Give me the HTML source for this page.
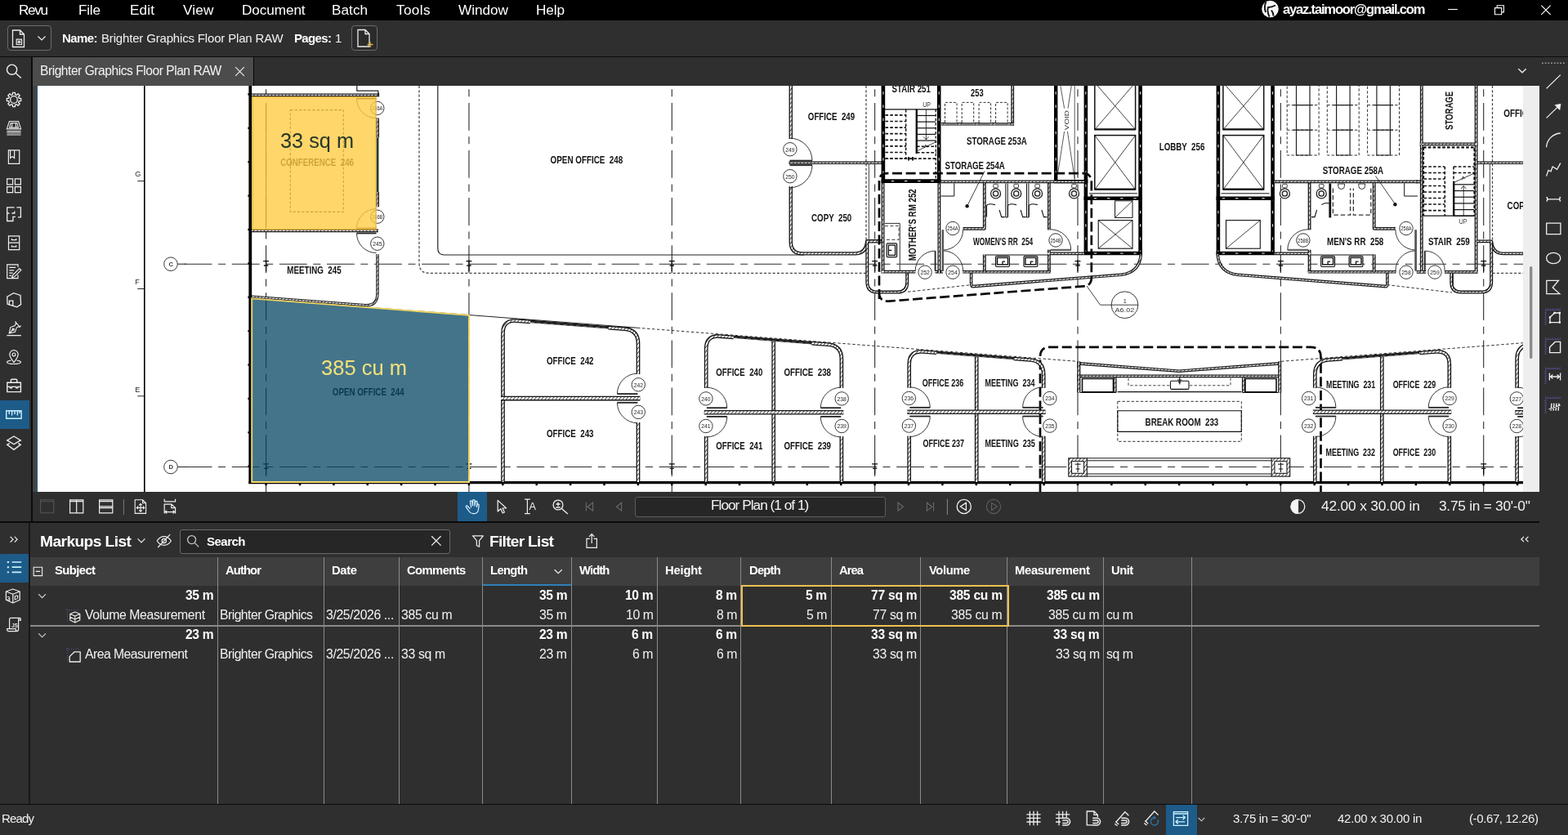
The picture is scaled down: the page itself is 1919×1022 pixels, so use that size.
<!DOCTYPE html>
<html lang="en"><head><meta charset="utf-8"><title>Revu - Brighter Graphics Floor Plan RAW</title>
<style>
html,body{margin:0;padding:0;background:#2f2f2f;overflow:hidden}
#app{position:relative;width:1919px;height:1022px;overflow:hidden;font-family:"Liberation Sans",sans-serif;background:#2f2f2f}
.b,.t,.i{position:absolute;display:block}
.t{white-space:pre;line-height:1;color:#f2f2f2;will-change:transform}
#cv{position:absolute;left:46px;top:105px;width:1838px;height:497px;background:#fff;overflow:hidden}
#cv svg{position:absolute;left:-46px;top:-105px}
#cv text{font-family:"Liberation Sans",sans-serif;stroke:none}
</style></head><body>
<div id="app">
<div class="b" style="left:0px;top:0px;width:1919px;height:25px;background:#000;"></div>
<span class="t" style="left:23px;top:3.74px;font-size:17.2px;letter-spacing:-1.38px;color:#fff;">Revu</span>
<span class="t" style="left:95.5px;top:3.74px;font-size:17.2px;letter-spacing:-0.24px;color:#fff;">File</span>
<span class="t" style="left:158.5px;top:3.74px;font-size:17.2px;letter-spacing:0.12px;color:#fff;">Edit</span>
<span class="t" style="left:224px;top:3.74px;font-size:17.2px;letter-spacing:0.18px;color:#fff;">View</span>
<span class="t" style="left:295.8px;top:3.74px;font-size:17.2px;letter-spacing:-0.1px;color:#fff;">Document</span>
<span class="t" style="left:405.8px;top:3.74px;font-size:17.2px;letter-spacing:0.05px;color:#fff;">Batch</span>
<span class="t" style="left:485px;top:3.74px;font-size:17.2px;letter-spacing:0.34px;color:#fff;">Tools</span>
<span class="t" style="left:560.5px;top:3.74px;font-size:17.2px;letter-spacing:-0.03px;color:#fff;">Window</span>
<span class="t" style="left:655.5px;top:3.74px;font-size:17.2px;letter-spacing:-0.12px;color:#fff;">Help</span>
<span class="t" style="left:1570px;top:3.75px;font-size:16.6px;letter-spacing:-1.2px;font-weight:700;color:#fff;">ayaz.taimoor@gmail.com</span>
<svg class="i" style="left:1543px;top:0px" width="23" height="23" viewBox="0 0 23 23" fill="none" stroke="#ececec" stroke-width="1.3" ><circle cx="11.5" cy="11" r="10.3" fill="#f4f4f4" stroke="none"/><path d="M6.5 2.5C4.5 6 4.3 10 6 15M18 6.5C15 8 12 9 9 9C8 12 8.5 16 10.5 20.5M13 12.5C14.5 14.5 15.5 17 15.5 19.5" stroke="#111" stroke-width="1.9"/></svg>
<svg class="i" style="left:1770px;top:4px" width="16" height="16" viewBox="0 0 16 16" fill="none" stroke="#fff" stroke-width="1.1" ><path d="M2.2 7.5H13.8"/></svg>
<svg class="i" style="left:1827px;top:4px" width="16" height="16" viewBox="0 0 16 16" fill="none" stroke="#fff" stroke-width="1.1" ><path d="M2.5 5.6h8.2v8.2h-8.2zM5.2 5.3V2.7h8.2v8.2h-2.5"/></svg>
<svg class="i" style="left:1884px;top:4px" width="16" height="16" viewBox="0 0 16 16" fill="none" stroke="#fff" stroke-width="1.2" ><path d="M2.3 2.6l11.3 11.3M13.6 2.6L2.3 13.9"/></svg>
<div class="b" style="left:0px;top:25px;width:1919px;height:44px;background:#2f2f2f;"></div>
<div class="b" style="left:0px;top:69px;width:1919px;height:1px;background:#0c0c0c;"></div>
<div class="b" style="left:9px;top:31px;width:54px;height:31px;border:1px solid #6c6c6c;border-radius:4px;box-sizing:border-box;background:#2b2b2b"></div>
<svg class="i" style="left:13px;top:35px" width="22" height="24" viewBox="0 0 22 24" fill="none" stroke="#ececec" stroke-width="1.3" ><path d="M2.5 2h9l5 5v15.5h-14z M11.5 2v5h5" stroke-width="1.3"/><path d="M7.2 13.2h6.3v6.3h-6.3z M9.3 15.3h2.1v2.1h-2.1z" stroke-width="1.2"/></svg>
<svg class="i" style="left:44px;top:42px" width="14" height="10" viewBox="0 0 14 10" fill="none" stroke="#ececec" stroke-width="1.2" ><path d="M2.5 2.5L7 7L11.5 2.5"/></svg>
<span class="t" style="left:76px;top:39.3px;font-size:15px;letter-spacing:-0.59px;font-weight:700;color:#fff;">Name:</span>
<span class="t" style="left:124px;top:39.3px;font-size:15px;letter-spacing:-0.17px;color:#f2f2f2;">Brighter Graphics Floor Plan RAW</span>
<span class="t" style="left:359.5px;top:39.3px;font-size:15px;letter-spacing:-0.64px;font-weight:700;color:#fff;">Pages:</span>
<span class="t" style="left:410px;top:39.3px;font-size:15px;color:#f2f2f2;">1</span>
<div class="b" style="left:430px;top:31px;width:32px;height:31px;border:1px solid #6c6c6c;border-radius:4px;box-sizing:border-box;background:#2b2b2b"></div>
<svg class="i" style="left:435px;top:34px" width="24" height="26" viewBox="0 0 24 26" fill="none" stroke="#ececec" stroke-width="1.3" ><path d="M3 2.5h9l5 5v15.5h-14z M12 2.5v5h5" stroke-width="1.3"/><path d="M18 17v7M14.5 20.5h7" stroke="#e0b23e" stroke-width="1.3"/></svg>
<div class="b" style="left:0px;top:70px;width:1919px;height:35px;background:#2f2f2f;"></div>
<div class="b" style="left:37.5px;top:70px;width:2px;height:568px;background:#0c0c0c;"></div>
<div class="b" style="left:40px;top:70px;width:270px;height:35px;background:#4c4c4c;"></div>
<div class="b" style="left:310px;top:70px;width:1.4px;height:35px;background:#050505;"></div>
<span class="t" style="left:49px;top:78.79px;font-size:15.6px;letter-spacing:-0.47px;color:#f4f4f4;">Brighter Graphics Floor Plan RAW</span>
<svg class="i" style="left:286px;top:80px" width="15" height="15" viewBox="0 0 15 15" fill="none" stroke="#ececec" stroke-width="1.2" ><path d="M2.2 2.2l10.6 10.6M12.8 2.2L2.2 12.8"/></svg>
<svg class="i" style="left:1856px;top:82px" width="14" height="10" viewBox="0 0 14 10" fill="none" stroke="#ececec" stroke-width="1.3" ><path d="M2.3 2.3L7 6.8L11.7 2.3"/></svg>
<div class="b" style="left:0px;top:70px;width:37.5px;height:568px;background:#2f2f2f;"></div>
<div class="b" style="left:0px;top:489.5px;width:36px;height:35px;background:#1d5b89;"></div>
<div class="b" style="left:39.5px;top:105px;width:4.5px;height:499px;background:#444;"></div>
<div class="b" style="left:43.6px;top:105px;width:2.4px;height:499px;background:linear-gradient(90deg,#3d5560,#17506a)"></div>
<div class="b" style="left:1884px;top:70px;width:35px;height:952px;background:#2f2f2f;"></div>
<div class="b" style="left:39.5px;top:602px;width:1844.5px;height:36px;background:#2f2f2f;"></div>
<div class="b" style="left:0px;top:638px;width:1884px;height:2px;background:#0a0a0a;"></div>
<div class="b" style="left:559.5px;top:602px;width:36.5px;height:36px;background:#1d5b89;"></div>
<div class="b" style="left:777px;top:607.5px;width:306.5px;height:25px;border:1px solid #5c5c5c;border-radius:3px;box-sizing:border-box;background:#262626"></div>
<span class="t" style="left:870px;top:610.36px;font-size:17.3px;letter-spacing:-1px;color:#f2f2f2;">Floor Plan (1 of 1)</span>
<span class="t" style="left:1616.5px;top:611.36px;font-size:17.3px;letter-spacing:-0.14px;color:#f2f2f2;">42.00 x 30.00 in</span>
<span class="t" style="left:1760.5px;top:611.36px;font-size:17.3px;letter-spacing:-0.25px;color:#f2f2f2;">3.75 in = 30'-0"</span>
<div class="b" style="left:0px;top:640px;width:1884px;height:382px;background:#2f2f2f;"></div>
<div class="b" style="left:35px;top:640px;width:1.6px;height:344px;background:#181818;"></div>
<div class="b" style="left:0px;top:677.5px;width:35px;height:35px;background:#1d5b89;"></div>
<span class="t" style="left:48.5px;top:652.75px;font-size:19.2px;letter-spacing:-0.58px;font-weight:700;color:#fff;">Markups List</span>
<div class="b" style="left:220px;top:648px;width:330.5px;height:30px;border:1px solid #6a6a6a;border-radius:3px;box-sizing:border-box;background:#262626"></div>
<span class="t" style="left:253px;top:654.6px;font-size:15px;letter-spacing:-0.51px;font-weight:700;color:#fff;">Search</span>
<span class="t" style="left:599px;top:652.75px;font-size:19.2px;letter-spacing:-0.74px;font-weight:700;color:#fff;">Filter List</span>
<div class="b" style="left:36.5px;top:682px;width:1847.5px;height:35px;background:#3e3e3e;"></div>
<div class="b" style="left:265.5px;top:682px;width:1.3px;height:302px;background:#8a8a8a;"></div>
<div class="b" style="left:395.5px;top:682px;width:1.3px;height:302px;background:#8a8a8a;"></div>
<div class="b" style="left:487.8px;top:682px;width:1.3px;height:302px;background:#8a8a8a;"></div>
<div class="b" style="left:589.5px;top:682px;width:1.3px;height:302px;background:#8a8a8a;"></div>
<div class="b" style="left:698.8px;top:682px;width:1.3px;height:302px;background:#8a8a8a;"></div>
<div class="b" style="left:803.5px;top:682px;width:1.3px;height:302px;background:#8a8a8a;"></div>
<div class="b" style="left:906.2px;top:682px;width:1.3px;height:302px;background:#8a8a8a;"></div>
<div class="b" style="left:1016.5px;top:682px;width:1.3px;height:302px;background:#8a8a8a;"></div>
<div class="b" style="left:1126.2px;top:682px;width:1.3px;height:302px;background:#8a8a8a;"></div>
<div class="b" style="left:1231.8px;top:682px;width:1.3px;height:302px;background:#8a8a8a;"></div>
<div class="b" style="left:1349.8px;top:682px;width:1.3px;height:302px;background:#8a8a8a;"></div>
<div class="b" style="left:1458px;top:682px;width:1.3px;height:302px;background:#8a8a8a;"></div>
<div class="b" style="left:590.5px;top:715px;width:108.5px;height:2px;background:#2f7fb8;"></div>
<span class="t" style="left:66.7px;top:691.07px;font-size:14.8px;letter-spacing:-0.58px;font-weight:700;color:#fff;">Subject</span>
<span class="t" style="left:276px;top:691.07px;font-size:14.8px;letter-spacing:-0.9px;font-weight:700;color:#fff;">Author</span>
<span class="t" style="left:406px;top:691.07px;font-size:14.8px;letter-spacing:-0.36px;font-weight:700;color:#fff;">Date</span>
<span class="t" style="left:498px;top:691.07px;font-size:14.8px;letter-spacing:-0.6px;font-weight:700;color:#fff;">Comments</span>
<span class="t" style="left:600px;top:691.07px;font-size:14.8px;letter-spacing:-0.66px;font-weight:700;color:#fff;">Length</span>
<span class="t" style="left:709.3px;top:691.07px;font-size:14.8px;letter-spacing:-0.89px;font-weight:700;color:#fff;">Width</span>
<span class="t" style="left:814px;top:691.07px;font-size:14.8px;letter-spacing:-0.21px;font-weight:700;color:#fff;">Height</span>
<span class="t" style="left:917.3px;top:691.07px;font-size:14.8px;letter-spacing:-0.81px;font-weight:700;color:#fff;">Depth</span>
<span class="t" style="left:1027.3px;top:691.07px;font-size:14.8px;letter-spacing:-0.97px;font-weight:700;color:#fff;">Area</span>
<span class="t" style="left:1137.3px;top:691.07px;font-size:14.8px;letter-spacing:-0.43px;font-weight:700;color:#fff;">Volume</span>
<span class="t" style="left:1242px;top:691.07px;font-size:14.8px;letter-spacing:-0.34px;font-weight:700;color:#fff;">Measurement</span>
<span class="t" style="left:1360.3px;top:691.07px;font-size:14.8px;letter-spacing:-0.52px;font-weight:700;color:#fff;">Unit</span>
<div class="b" style="left:36.5px;top:765.3px;width:1847.5px;height:2px;background:#8a8a8a;"></div>
<span class="t" style="left:226.83px;top:720.59px;font-size:15.6px;letter-spacing:-0.3px;font-weight:700;color:#fff;">35 m</span>
<span class="t" style="left:659.63px;top:720.59px;font-size:15.6px;letter-spacing:-0.3px;font-weight:700;color:#fff;">35 m</span>
<span class="t" style="left:764.83px;top:720.59px;font-size:15.6px;letter-spacing:-0.3px;font-weight:700;color:#fff;">10 m</span>
<span class="t" style="left:876.29px;top:720.59px;font-size:15.6px;letter-spacing:-0.34px;font-weight:700;color:#fff;">8 m</span>
<span class="t" style="left:986.09px;top:720.59px;font-size:15.6px;letter-spacing:-0.34px;font-weight:700;color:#fff;">5 m</span>
<span class="t" style="left:1065.86px;top:720.59px;font-size:15.6px;letter-spacing:-0.24px;font-weight:700;color:#fff;">77 sq m</span>
<span class="t" style="left:1162px;top:720.59px;font-size:15.6px;letter-spacing:-0.24px;font-weight:700;color:#fff;">385 cu m</span>
<span class="t" style="left:1280.7px;top:720.59px;font-size:15.6px;letter-spacing:-0.24px;font-weight:700;color:#fff;">385 cu m</span>
<span class="t" style="left:660.4px;top:744.83px;font-size:15.8px;letter-spacing:-0.41px;color:#f2f2f2;">35 m</span>
<span class="t" style="left:765.6px;top:744.83px;font-size:15.8px;letter-spacing:-0.41px;color:#f2f2f2;">10 m</span>
<span class="t" style="left:877.08px;top:744.83px;font-size:15.8px;letter-spacing:-0.46px;color:#f2f2f2;">8 m</span>
<span class="t" style="left:986.88px;top:744.83px;font-size:15.8px;letter-spacing:-0.46px;color:#f2f2f2;">5 m</span>
<span class="t" style="left:1068.26px;top:744.83px;font-size:15.8px;letter-spacing:-0.33px;color:#f2f2f2;">77 sq m</span>
<span class="t" style="left:1164.38px;top:744.83px;font-size:15.8px;letter-spacing:-0.32px;color:#f2f2f2;">385 cu m</span>
<span class="t" style="left:1283.08px;top:744.83px;font-size:15.8px;letter-spacing:-0.32px;color:#f2f2f2;">385 cu m</span>
<span class="t" style="left:226.83px;top:768.79px;font-size:15.6px;letter-spacing:-0.3px;font-weight:700;color:#fff;">23 m</span>
<span class="t" style="left:659.63px;top:768.79px;font-size:15.6px;letter-spacing:-0.3px;font-weight:700;color:#fff;">23 m</span>
<span class="t" style="left:773.29px;top:768.79px;font-size:15.6px;letter-spacing:-0.34px;font-weight:700;color:#fff;">6 m</span>
<span class="t" style="left:876.29px;top:768.79px;font-size:15.6px;letter-spacing:-0.34px;font-weight:700;color:#fff;">6 m</span>
<span class="t" style="left:1065.86px;top:768.79px;font-size:15.6px;letter-spacing:-0.24px;font-weight:700;color:#fff;">33 sq m</span>
<span class="t" style="left:1289.16px;top:768.79px;font-size:15.6px;letter-spacing:-0.24px;font-weight:700;color:#fff;">33 sq m</span>
<span class="t" style="left:660.4px;top:792.83px;font-size:15.8px;letter-spacing:-0.41px;color:#f2f2f2;">23 m</span>
<span class="t" style="left:774.08px;top:792.83px;font-size:15.8px;letter-spacing:-0.46px;color:#f2f2f2;">6 m</span>
<span class="t" style="left:877.08px;top:792.83px;font-size:15.8px;letter-spacing:-0.46px;color:#f2f2f2;">6 m</span>
<span class="t" style="left:1068.26px;top:792.83px;font-size:15.8px;letter-spacing:-0.33px;color:#f2f2f2;">33 sq m</span>
<span class="t" style="left:1291.56px;top:792.83px;font-size:15.8px;letter-spacing:-0.33px;color:#f2f2f2;">33 sq m</span>
<span class="t" style="left:103.5px;top:744.83px;font-size:15.8px;letter-spacing:-0.39px;color:#f2f2f2;">Volume Measurement</span>
<span class="t" style="left:269.3px;top:744.83px;font-size:15.8px;letter-spacing:-0.56px;color:#f2f2f2;">Brighter Graphics</span>
<span class="t" style="left:399px;top:744.83px;font-size:15.8px;letter-spacing:-0.38px;color:#f2f2f2;">3/25/2026 ...</span>
<span class="t" style="left:491px;top:744.83px;font-size:15.8px;letter-spacing:-0.32px;color:#f2f2f2;">385 cu m</span>
<span class="t" style="left:1353.5px;top:744.83px;font-size:15.8px;letter-spacing:-0.4px;color:#f2f2f2;">cu m</span>
<span class="t" style="left:103.5px;top:792.83px;font-size:15.8px;letter-spacing:-0.56px;color:#f2f2f2;">Area Measurement</span>
<span class="t" style="left:269.3px;top:792.83px;font-size:15.8px;letter-spacing:-0.56px;color:#f2f2f2;">Brighter Graphics</span>
<span class="t" style="left:399px;top:792.83px;font-size:15.8px;letter-spacing:-0.38px;color:#f2f2f2;">3/25/2026 ...</span>
<span class="t" style="left:491px;top:792.83px;font-size:15.8px;letter-spacing:-0.33px;color:#f2f2f2;">33 sq m</span>
<span class="t" style="left:1353.5px;top:792.83px;font-size:15.8px;letter-spacing:-0.4px;color:#f2f2f2;">sq m</span>
<div class="b" style="left:906.5px;top:715.5px;width:328px;height:51px;border:2px solid #eec052;box-sizing:border-box"></div>
<div class="b" style="left:0px;top:984px;width:1919px;height:1px;background:#0c0c0c;"></div>
<div class="b" style="left:0px;top:985px;width:1919px;height:37px;background:#2f2f2f;"></div>
<div class="b" style="left:1426.5px;top:985px;width:38px;height:37px;background:#1d5b89;"></div>
<span class="t" style="left:1.5px;top:994.3px;font-size:15px;letter-spacing:-0.84px;color:#f2f2f2;">Ready</span>
<span class="t" style="left:1509.3px;top:994.3px;font-size:15px;letter-spacing:-0.32px;color:#f2f2f2;">3.75 in = 30'-0"</span>
<span class="t" style="left:1637px;top:994.3px;font-size:15px;letter-spacing:-0.22px;color:#f2f2f2;">42.00 x 30.00 in</span>
<span class="t" style="left:1798px;top:994.3px;font-size:15px;letter-spacing:-0.39px;color:#f2f2f2;">(-0.67, 12.26)</span>
<svg class="i" style="left:0;top:0;pointer-events:none" width="1919" height="1022" viewBox="0 0 1919 1022" fill="none" stroke-linecap="butt"><g transform="translate(8 78)" stroke="#efefef" stroke-width="1.4"><circle cx="6.6" cy="7.2" r="6.1"/><path d="M11.2 11.6L17.8 17.6"/></g><g transform="translate(8 113)" stroke="#efefef" stroke-width="1.3"><path d="M17.67 7.49L17.67 10.51L15.42 10.54L14.63 12.45L16.2 14.06L14.06 16.2L12.45 14.63L10.54 15.42L10.51 17.67L7.49 17.67L7.46 15.42L5.55 14.63L3.94 16.2L1.8 14.06L3.37 12.45L2.58 10.54L0.33 10.51L0.33 7.49L2.58 7.46L3.37 5.55L1.8 3.94L3.94 1.8L5.55 3.37L7.46 2.58L7.49 0.33L10.51 0.33L10.54 2.58L12.45 3.37L14.06 1.8L16.2 3.94L14.63 5.55L15.42 7.46Z" stroke-linejoin="round"/><circle cx="9" cy="9" r="4.3"/></g><g transform="translate(8 148)" stroke="#efefef" stroke-width="1.1"><path d="M3.4 0.5h11.2l3 9.4H0.4z M5.2 2.5h7.6l1.6 5.6H3.6z M7 2.6l-0.7 5.4 M11 2.6l0.7 5.4 M0.4 12.6h17.2 M0.4 14.8h17.2 M0.4 17h17.2"/></g><g transform="translate(8 183)" stroke="#efefef" stroke-width="1.2"><path d="M2.4 0.9h13.3v16.5H2.4z M4.6 0.9v9.6l2.5-2l2.5 2V0.9"/></g><g transform="translate(8 218)" stroke="#efefef" stroke-width="1.2"><path d="M0.6 0.9h7v7h-7z M10.4 0.9h7v7h-7z M0.6 10.6h7v7h-7z M10.4 10.6h7v7h-7z"/></g><g transform="translate(8 253)" stroke="#efefef" stroke-width="1.3"><path d="M9.6 0.9H0.7v16.6h7.2v-5.2h3 M3.4 8h-2.6 M6.4 8h3.4V5.4 M12.4 0.9h5v12h-3.4"/></g><g transform="translate(8 288)" stroke="#efefef" stroke-width="1.2"><path d="M2.5 0.8h13.2v16.8H2.5z M2.5 9.2h13.2 M6.4 4v1.7h5.4V4 M6.4 12.2v1.7h5.4v-1.7"/></g><g transform="translate(8 323)" stroke="#efefef" stroke-width="1.2"><path d="M14 4V0.8H0.7v16.8H14v-4 M3.2 4.4h8 M3.2 7.8h6 M3.2 11.2h4.6 M3.2 14.4h3"/><path d="M15.8 5.6l2 2l-8.2 8.2l-3 1l1-3z" fill="#2e2e2e"/></g><g transform="translate(8 358)" stroke="#efefef" stroke-width="1.3"><path d="M0.7 5.2L8.6 0.7l8.4 2.7l0.6 11.2l-4.8 3.2l-11.7-3.6z M3.4 14.6v-4.4h4.4v5.6"/></g><g transform="translate(8 393)" stroke="#efefef" stroke-width="1.3"><path d="M0.4 17.6h17.4"/><path d="M10.6 1.2l5.6 5.6 M11.6 2.4l-1.4 3.2l-5.4 2l-1.6 7.4l7.2-1.8l2-5.4l3.2-1.4 M3.4 14.8l4.4-4.4 M17.6 5.6l-2 2.4 M10.6 0.4l1.4 1.6" stroke-width="1.1"/><circle cx="8.2" cy="10.2" r="1.1"/></g><g transform="translate(8 428)" stroke="#efefef" stroke-width="1.2"><path d="M9 15.6C5.4 11 3.8 8.4 3.8 5.8a5.2 5.2 0 0 1 10.4 0C14.2 8.4 12.6 11 9 15.6z"/><circle cx="9" cy="5.9" r="1.9"/><path d="M5.4 13.2C2.4 13.6 0.6 14.3 0.6 15.3c0 1.3 3.6 2.2 8.4 2.2s8.4-0.9 8.4-2.2c0-1-1.8-1.7-4.8-2.1"/></g><g transform="translate(8 463)" stroke="#efefef" stroke-width="1.4"><path d="M0.8 5.2h16.6v11.4H0.8z M5.4 5V2.6Q5.4 1.2 6.8 1.2h4.6Q12.8 1.2 12.8 2.6V5 M0.8 10.4h3.6v1.4h2v-1.4h5.4v1.4h2v-1.4h3.6"/></g><g transform="translate(8 498)" stroke="#c9f1ff" stroke-width="1.4"><path d="M-0.3 4.8h18.4v9.4H-0.3z M3.2 5v4 M6.6 5v5.6 M10 5v4 M13.4 5v5.6 M16 5v3"/></g><g transform="translate(8 533)" stroke="#efefef" stroke-width="1.4"><path d="M9 1L17.2 5.9L9 10.8L0.8 5.9z M3.6 9.6L0.8 11.4L9 17.4L17.2 11.4L14.4 9.6"/></g><path d="M1887 77.3H1915" stroke="#9a9a9a" stroke-width="1.6" stroke-dasharray="1.8 1.9"/><g transform="translate(1892 90)" stroke="#efefef" stroke-width="1.3"><path d="M0.6 18.4L17.8 1.6"/></g><g transform="translate(1892 126)" stroke="#efefef" stroke-width="1.3"><path d="M0.6 18.4L15 4.4"/><path d="M11.2 2.6L18 1.4L16.8 8.4z" fill="#efefef" stroke-width="0.8"/></g><g transform="translate(1892 162)" stroke="#efefef" stroke-width="1.3"><path d="M0.6 18.2C1 9.6 7.6 1.8 17.8 1"/></g><g transform="translate(1892 198)" stroke="#efefef" stroke-width="1.3"><path d="M0.6 17.6L3 10.4l3 1.4l2.2-5.8l5.4 3.4L17.8 1.6"/></g><g transform="translate(1892 234)" stroke="#efefef" stroke-width="1.2"><path d="M1.6 9.8H17 M1.6 7v5.6 M17 7v5.6 M0.6 7.2l2 2.6l-2 2.6 M18 7.2l-2 2.6l2 2.6" stroke-width="1.2"/></g><g transform="translate(1892 270)" stroke="#efefef" stroke-width="1.3"><path d="M0.7 3.2h17.2v13.4H0.7z"/></g><g transform="translate(1892 306)" stroke="#efefef" stroke-width="1.3"><ellipse cx="9.2" cy="10" rx="8.6" ry="6.6"/></g><g transform="translate(1892 342)" stroke="#efefef" stroke-width="1.3"><path d="M0.8 1.4h14.6l-7.2 8.6l8.6 7.6H0.8z"/></g><g transform="translate(1892 378)" stroke="#efefef" stroke-width="1.3"><path d="M-0.2 -1.2V20 M-0.4 1.4H17.6 M2.6 -0.6v2 M5.6 -0.6v2 M8.6 -0.6v2 M11.6 -0.6v2 M14.6 -0.6v2 M17.4 -0.6v2 M-1.8 4.4h1.6 M-1.8 7.4h1.6 M-1.8 10.4h1.6 M-1.8 13.4h1.6 M-1.8 16.4h1.6 M-1.8 19.4h1.6" stroke="#504f8c" stroke-width="0.9"/><path d="M5 16.6V10.4l5.6-5.4h6.2v11.6z"/><path d="M3.8 15.4h2.4v2.4H3.8z M3.8 9.2h2.4v2.4H3.8z M9.4 3.8h2.4v2.4H9.4z M15.6 3.8h2.4v2.4h-2.4z M15.6 15.4h2.4v2.4h-2.4z" fill="#efefef" stroke="none"/></g><g transform="translate(1892 414)" stroke="#efefef" stroke-width="1.4"><path d="M-0.2 -1.2V20 M-0.4 1.4H17.6 M2.6 -0.6v2 M5.6 -0.6v2 M8.6 -0.6v2 M11.6 -0.6v2 M14.6 -0.6v2 M17.4 -0.6v2 M-1.8 4.4h1.6 M-1.8 7.4h1.6 M-1.8 10.4h1.6 M-1.8 13.4h1.6 M-1.8 16.4h1.6 M-1.8 19.4h1.6" stroke="#504f8c" stroke-width="0.9"/><path d="M4.6 17.6V11l6.6-6.6h6.4v13.2z"/></g><g transform="translate(1892 450)" stroke="#efefef" stroke-width="1.3"><path d="M-0.2 -1.2V20 M-0.4 1.4H17.6 M2.6 -0.6v2 M5.6 -0.6v2 M8.6 -0.6v2 M11.6 -0.6v2 M14.6 -0.6v2 M17.4 -0.6v2 M-1.8 4.4h1.6 M-1.8 7.4h1.6 M-1.8 10.4h1.6 M-1.8 13.4h1.6 M-1.8 16.4h1.6 M-1.8 19.4h1.6" stroke="#504f8c" stroke-width="0.9"/><path d="M4.4 6.6v8.8 M17.6 6.6v8.8 M5.4 11h11.2 M8.4 8.6L5.6 11l2.8 2.4 M13.6 8.6l2.8 2.4l-2.8 2.4" stroke-width="1.3"/></g><g transform="translate(1892 486)" stroke="#efefef" stroke-width="1.3"><path d="M-0.2 -1.2V20 M-0.4 1.4H17.6 M2.6 -0.6v2 M5.6 -0.6v2 M8.6 -0.6v2 M11.6 -0.6v2 M14.6 -0.6v2 M17.4 -0.6v2 M-1.8 4.4h1.6 M-1.8 7.4h1.6 M-1.8 10.4h1.6 M-1.8 13.4h1.6 M-1.8 16.4h1.6 M-1.8 19.4h1.6" stroke="#504f8c" stroke-width="0.9"/><path d="M7 7.6l-1 9 M10 7.6l-1 9 M13 7.6l-1 9 M16 7.6l-1 9 M3.6 14.6l14-4.8" stroke-width="1.4"/></g><g transform="translate(49 611)" stroke="#555" stroke-width="1.1"><path d="M0.6 0.8h16.2v16H0.6z M0.6 2.8h16.2"/></g><g transform="translate(85 611)" stroke="#efefef" stroke-width="1.2"><path d="M0.6 0.8h16.2v16H0.6z M8.7 0.8v16 M0.6 2.6h16.2"/></g><g transform="translate(121 611)" stroke="#efefef" stroke-width="1.2"><path d="M0.6 0.8h16.2v16H0.6z M0.6 8.8h16.2 M0.6 2.6h16.2 M0.6 10.6h16.2"/></g><path d="M151.4 611V630" stroke="#777" stroke-width="1"/><g transform="translate(164.6 611)" stroke="#efefef" stroke-width="1.1"><path d="M0.6 0.8h9.4l4 4v12.6H0.6z M10 0.8v4h4 M7.4 5.6v9.6 M2.6 10.4h9.6 M5.6 7.4l1.8-1.8l1.8 1.8 M5.6 13.4l1.8 1.8l1.8-1.8 M4.4 8.6l-1.8 1.8l1.8 1.8 M10.4 8.6l1.8 1.8l-1.8 1.8"/></g><g transform="translate(200.6 610.6)" stroke="#efefef" stroke-width="1.2"><path d="M0.6 0.2v3.6 M14 0.2v3.6 M0.6 3.2h13.4 M0.6 18V6.6h8.6l4.8 4.4v7 M9.2 6.6v4.4h4.8 M1.6 16h11.6 M3.6 14l-2 2l2 2 M11 14l2 2l-2 2"/></g><g transform="translate(570 610.6)" stroke="#d6f2ff" stroke-width="1.25" stroke-linecap="round" stroke-linejoin="round"><path d="M4.6 11.4L2.2 8.8C1 7.6-0.4 9 0.7 10.5L4.2 15.4C5.4 17.2 6.8 18 8.8 18h1.6c3 0 4.6-1.8 5-4.6l0.8-5.6c0.2-1.6-1.8-2-2.2-0.4l-0.6 2.6 M13.4 9.8L14 4c0.2-1.6-2-1.9-2.3-0.3L11 8.6 M11 8.4V2.2c0-1.6-2.4-1.6-2.4 0v6 M8.6 8.2L7.8 3.2C7.5 1.6 5.2 2 5.5 3.6L6.6 10 M4.6 11.4l0.4 0.4"/></g><g transform="translate(608 611.6)" stroke="#efefef" stroke-width="1.2" stroke-linejoin="round"><path d="M1.2 0.8v13.6l3.6-3.2l2.4 5.2l2.2-1l-2.4-5h4.6z"/></g><g transform="translate(641.6 610.6)" stroke="#efefef" stroke-width="1.2"><path d="M0.4 0.6h6.8 M0.4 18h6.8 M3.8 0.6V18"/></g><text x="647.6" y="624.2" font-size="13.4" fill="#efefef" textLength="8.4" lengthAdjust="spacingAndGlyphs" stroke="none">A</text><g transform="translate(672 608)" stroke="#efefef" stroke-width="1.3"><circle cx="11" cy="10" r="5.9"/><path d="M15.4 14.4L22.8 21 M8.4 9h5.2 M11 6.4v5.2 M8.4 13h5.2"/></g><g transform="translate(716.6 614.6)" stroke="#6a6a6a" stroke-width="1.1"><path d="M0.8 0.2v10.8 M9 0.6L2.4 5.6L9 10.6z"/></g><g transform="translate(753.6 614.6)" stroke="#6a6a6a" stroke-width="1.1"><path d="M7 0.6L0.8 5.6L7 10.6z"/></g><g transform="translate(1098.6 614.6)" stroke="#6a6a6a" stroke-width="1.1"><path d="M0.4 0.6L6.8 5.6L0.4 10.6z"/></g><g transform="translate(1134 614.6)" stroke="#6a6a6a" stroke-width="1.1"><path d="M0.4 0.6L6.8 5.6L0.4 10.6z M8.6 0.2v10.8"/></g><path d="M1159.4 610.8V630" stroke="#8a8a8a" stroke-width="1"/><g transform="translate(1179.8 620)" stroke="#efefef" stroke-width="1.3"><circle r="8.6"/><path d="M2.6 -4.6L-4.4 0L2.6 4.6z"/></g><g transform="translate(1216 620)" stroke="#5c5c5c" stroke-width="1.2"><circle r="8.6"/><path d="M-2.4 -4.6L4.6 0L-2.4 4.6z"/></g><g transform="translate(1579.4 611)" stroke="#efefef" stroke-width="1.3"><circle cx="9" cy="9" r="8.4"/><path d="M9 0.6a8.4 8.4 0 0 0 0 16.8z" fill="#f4f4f4"/></g><g transform="translate(12 656)" stroke="#efefef" stroke-width="1.2"><path d="M0.6 0.8l3.4 3.4l-3.4 3.4 M5.8 0.8l3.4 3.4l-3.4 3.4"/></g><g transform="translate(1861 656.4)" stroke="#efefef" stroke-width="1.2"><path d="M4 0.4L0.8 3.6L4 6.8 M9.4 0.4L6.2 3.6L9.4 6.8"/></g><g transform="translate(8.6 686.6)" stroke="#c9f1ff" stroke-width="1.7"><path d="M6 1.4h11.6 M6 7.6h11.6 M6 13.8h11.6" stroke-width="1.7"/><path d="M0.2 1.4h2.2 M0.2 7.6h2.2 M0.2 13.8h2.2" stroke-width="1.9"/></g><g transform="translate(6.6 720.4)" stroke="#efefef" stroke-width="1.2" stroke-linejoin="round"><path d="M9.2 0.6L17.6 3.6V13.8L9.2 17.6L0.8 13.8V3.6z M0.8 3.6l8.4 3.2l8.4-3.2 M9.2 6.8v10.8"/></g><text x="8.4" y="734.6" font-size="7.4" font-weight="700" fill="#efefef" stroke="none" transform="skewY(20) translate(0 -3.1)">3</text><text x="17.2" y="734.6" font-size="7.4" font-weight="700" fill="#efefef" stroke="none" transform="skewY(-20) translate(0 6.3)">D</text><text x="14.2" y="767.6" font-size="6.6" font-weight="700" fill="#efefef" textLength="7.6" lengthAdjust="spacingAndGlyphs" stroke="none">JS</text><g transform="translate(8 755.6)" stroke="#efefef" stroke-width="1.2" stroke-linejoin="round"><path d="M3.6 14V2.4Q3.6 0.8 5.2 0.8H16Q14.6 1.2 14.6 3V14.6Q14.6 17 12.2 17H2.4Q0.6 17 0.6 15.2V14H11.4v1.2Q11.4 17 12.6 17 M14.6 3.6h2.8V2.4Q17.4 0.8 16 0.8"/></g><g transform="translate(168 658.6)" stroke="#efefef" stroke-width="1.2"><path d="M0.6 0.8l4.4 4.4l4.4-4.4"/></g><g transform="translate(191.6 653.6)" stroke="#efefef" stroke-width="1.2"><path d="M0.6 8.4C3 4.6 6 3 9.2 3s6.2 1.6 8.6 5.4c-2.4 3.8-5.4 5.4-8.6 5.4S3 12.2 0.6 8.4z M1.6 16.4L16.6 0.6"/><circle cx="9.2" cy="8.4" r="2.6"/></g><g transform="translate(229 655)" stroke="#c8c8c8" stroke-width="1.3"><circle cx="5.6" cy="5.6" r="5"/><path d="M9.2 9.4l5 5"/></g><g transform="translate(527.6 655.6)" stroke="#efefef" stroke-width="1.3"><path d="M0.6 0.6l11.4 11.4 M12 0.6L0.6 12"/></g><g transform="translate(578 655)" stroke="#efefef" stroke-width="1.2" stroke-linejoin="round"><path d="M0.6 0.8h12.8L8.6 6.6v7.600l-3.2-1.6V6.6z"/></g><g transform="translate(717.4 653)" stroke="#efefef" stroke-width="1.2"><path d="M4.4 6.4H0.6v11h12.4v-11H9.2 M6.8 12V0.8 M3.6 3.8l3.2-3.200l3.2 3.2"/></g><g transform="translate(40.6 693.6)" stroke="#efefef" stroke-width="1.1"><path d="M0.6 0.6h10.400v10.400H0.6z M3 5.8h5.6"/></g><g transform="translate(678 696.6)" stroke="#efefef" stroke-width="1.2"><path d="M0.6 0.6l4.6 4.400l4.6-4.4"/></g><g transform="translate(46.6 726.6)" stroke="#d8d8d8" stroke-width="1.1"><path d="M0.6 0.6l4.4 4.400l4.4-4.4"/></g><g transform="translate(46.6 774.8)" stroke="#d8d8d8" stroke-width="1.1"><path d="M0.6 0.6l4.4 4.400l4.4-4.4"/></g><g transform="translate(80.6 744.6)" stroke="#efefef" stroke-width="1.1"><path d="M2 0.6V17.6 M0.6 2H17.6" stroke="#56548f" stroke-width="1" stroke-dasharray="1.2 1.6"/><path d="M11.2 4.400l6 2.400v7.600l-6 3l-6-3V6.800z M5.2 6.800l6 2.600l6-2.6 M11.2 9.400v8 M5.2 10.600l6 2.800l6-2.8" stroke-linejoin="round"/></g><g transform="translate(80.6 792.6)" stroke="#efefef" stroke-width="1.3"><path d="M2 0.6V17.6 M0.6 2H17.6" stroke="#56548f" stroke-width="1" stroke-dasharray="1.2 1.6"/><path d="M4.6 17.400V11l6-5.800h7v12.200z" stroke-linejoin="round"/></g><g transform="translate(1256 992.4)" stroke="#efefef" stroke-width="1.3"><path d="M4.4 0.4v17.4 M9 0.4v17.4 M13.6 0.4v17.4 M0.4 4.400h17.2 M0.4 9h17.2 M0.4 13.600h17.2"/></g><g transform="translate(1291.6 992.4)" stroke="#efefef" stroke-width="1.3"><path d="M4.4 0.4v17.4 M9 0.4v8 M13.6 0.4v8 M0.4 4.400h17.2 M0.4 9h9 M0.4 13.600h6"/><path d="M8.6 8.8h5a4.4 4.4 0 0 1 0 8.800h-5 M8.6 11.6h5.200a1.7 1.7 0 0 1 0 3.400h-5.2" stroke-width="1.5"/></g><g transform="translate(1329.6 992.4)" stroke="#efefef" stroke-width="1.3"><path d="M8 17.400H0.6V0.6h8.800l4.4 4.400v3 M9.4 0.6v4.400h4.4"/><path d="M7.6 8.8h5a4.4 4.4 0 0 1 0 8.800h-5 M7.6 11.6h5.200a1.7 1.7 0 0 1 0 3.400h-5.2" stroke-width="1.5"/></g><g transform="translate(1363.6 992.4)" stroke="#efefef" stroke-width="1.3"><path d="M2.4 13.600L13.2 1.400l4.6 4.4 M0.6 15.800l3.4 2.6 M1.6 13l4 3.6"/><path d="M8.6 8.8h5a4.4 4.4 0 0 1 0 8.800h-5 M8.6 11.6h5.200a1.7 1.7 0 0 1 0 3.400h-5.2" stroke-width="1.5"/></g><g transform="translate(1399.6 991.6)" stroke="#efefef" stroke-width="1.3"><path d="M2.4 13.600L13.2 1.400l4.8 4.6 M0.6 15.800l3.4 2.6 M1.6 13l4 3.6"/><path d="M17.2 11.400a4.6 4.6 0 1 1-3.6-2.2 M12.4 7.200l2 2l-2.2 1.6" stroke="#2a72a8" stroke-width="1.5"/></g><g transform="translate(1435.8 993)" stroke="#c9f1ff" stroke-width="1.3"><path d="M0.6 0.600h17.200v16.800H0.600z M0.6 3h17.2 M3.4 7.600h11 M11.8 5l2.8 2.600l-2.8 2.6 M14.4 12.800h-11 M6 10.200l-2.8 2.600l2.8 2.6"/></g><g transform="translate(1466 1000.4)" stroke="#cfcfcf" stroke-width="1.1"><path d="M0.6 0.400l3.8 4l3.8-4"/></g></svg>
<div id="cv">
<svg width="1919" height="1022" viewBox="0 0 1919 1022" fill="none" stroke="#111" stroke-width="1">
<defs><pattern id="h" width="3.4" height="3.4" patternUnits="userSpaceOnUse" patternTransform="rotate(38)"><rect width="3.4" height="3.4" fill="#fff" stroke="none"/><rect width="0.95" height="3.4" fill="#444" stroke="none"/></pattern></defs>
<path d="M176.8 105V602" stroke="#000" stroke-width="1.6"/><path d="M168.3 221.6H176.5" stroke-width="0.9"/><text x="165.2" y="216.4" font-size="9.2" fill="#2a2a2a">G</text><path d="M168.3 353.5H176.5" stroke-width="0.9"/><text x="165.2" y="348.3" font-size="9.2" fill="#2a2a2a">F</text><path d="M168.3 484.8H176.5" stroke-width="0.9"/><text x="165.2" y="479.6" font-size="9.2" fill="#2a2a2a">E</text><circle cx="209" cy="323.2" r="8.3" fill="#fff" stroke="#222" stroke-width="0.9"/><text x="206.5" y="326" font-size="7.6" font-weight="700" fill="#333">C</text><circle cx="209" cy="571.5" r="8.3" fill="#fff" stroke="#222" stroke-width="0.9"/><text x="206.5" y="574.3" font-size="7.6" font-weight="700" fill="#333">D</text><path d="M325.6 105V602" stroke="#2c2c2c" stroke-width="1.1" stroke-dasharray="33.8 7.6 9 7.7" stroke-dashoffset="37.2"/><path d="M573.95 105V602" stroke="#2c2c2c" stroke-width="1.1" stroke-dasharray="33.8 7.6 9 7.7" stroke-dashoffset="37.2"/><path d="M822.3 105V602" stroke="#2c2c2c" stroke-width="1.1" stroke-dasharray="33.8 7.6 9 7.7" stroke-dashoffset="37.2"/><path d="M1070.65 105V602" stroke="#2c2c2c" stroke-width="1.1" stroke-dasharray="33.8 7.6 9 7.7" stroke-dashoffset="37.2"/><path d="M1319 105V602" stroke="#2c2c2c" stroke-width="1.1" stroke-dasharray="33.8 7.6 9 7.7" stroke-dashoffset="37.2"/><path d="M1567.35 105V602" stroke="#2c2c2c" stroke-width="1.1" stroke-dasharray="33.8 7.6 9 7.7" stroke-dashoffset="37.2"/><path d="M1815.7 105V602" stroke="#2c2c2c" stroke-width="1.1" stroke-dasharray="33.8 7.6 9 7.7" stroke-dashoffset="37.2"/><path d="M217.5 323.2H1864" stroke="#2c2c2c" stroke-width="1.1" stroke-dasharray="33.8 7.6 9 7.7" stroke-dashoffset="49.9"/><path d="M217.5 323.2H228" stroke="#2c2c2c" stroke-width="1.1"/><path d="M217.5 571.5H1864" stroke="#2c2c2c" stroke-width="1.1" stroke-dasharray="33.8 7.6 9 7.7" stroke-dashoffset="49.9"/><path d="M217.5 571.5H228" stroke="#2c2c2c" stroke-width="1.1"/><path d="M325.6 126.2V280"/><path d="M325.6 318.2V332.2 M322.1 319.6h7 M322.9 325h5.4" stroke-width="1.35"/><path d="M325.6 566.5V580.5 M322.1 567.9h7 M322.9 573.3h5.4" stroke-width="1.35"/><path d="M573.95 318.2V332.2 M570.45 319.6h7 M571.25 325h5.4" stroke-width="1.35"/><path d="M573.95 566.5V580.5 M570.45 567.9h7 M571.25 573.3h5.4" stroke-width="1.35"/><path d="M822.3 318.2V332.2 M818.8 319.6h7 M819.6 325h5.4" stroke-width="1.35"/><path d="M822.3 566.5V580.5 M818.8 567.9h7 M819.6 573.3h5.4" stroke-width="1.35"/><path d="M1070.65 318.2V332.2 M1067.15 319.6h7 M1067.95 325h5.4" stroke-width="1.35"/><path d="M1070.65 566.5V580.5 M1067.15 567.9h7 M1067.95 573.3h5.4" stroke-width="1.35"/><path d="M1319 318.2V332.2 M1315.5 319.6h7 M1316.3 325h5.4" stroke-width="1.35"/><path d="M1319 566.5V580.5 M1315.5 567.9h7 M1316.3 573.3h5.4" stroke-width="1.35"/><path d="M1567.35 318.2V332.2 M1563.85 319.6h7 M1564.65 325h5.4" stroke-width="1.35"/><path d="M1567.35 566.5V580.5 M1563.85 567.9h7 M1564.65 573.3h5.4" stroke-width="1.35"/><path d="M1815.7 318.2V332.2 M1812.2 319.6h7 M1813 325h5.4" stroke-width="1.35"/><path d="M1815.7 566.5V580.5 M1812.2 567.9h7 M1813 573.3h5.4" stroke-width="1.35"/><path d="M513 105V322Q513 334.3 525 334.3H1060 M1060 105V296" stroke="#444" stroke-width="1.25" stroke-dasharray="3.1 2.2"/><path d="M535.8 105V304Q535.8 312 543.8 312H984" stroke="#222" stroke-width="1.2"/><path d="M306.3 105V592" stroke="#000" stroke-width="3.8"/><path d="M304.4 590.6H1864" stroke="#000" stroke-width="3.2"/><rect x="324.4" y="592" width="2.4" height="2.2" fill="#000" stroke="none"/><rect x="365.79" y="592" width="2.4" height="2.2" fill="#000" stroke="none"/><rect x="407.18" y="592" width="2.4" height="2.2" fill="#000" stroke="none"/><rect x="448.57" y="592" width="2.4" height="2.2" fill="#000" stroke="none"/><rect x="489.96" y="592" width="2.4" height="2.2" fill="#000" stroke="none"/><rect x="531.35" y="592" width="2.4" height="2.2" fill="#000" stroke="none"/><rect x="572.74" y="592" width="2.4" height="2.2" fill="#000" stroke="none"/><rect x="614.13" y="592" width="2.4" height="2.2" fill="#000" stroke="none"/><rect x="655.52" y="592" width="2.4" height="2.2" fill="#000" stroke="none"/><rect x="696.91" y="592" width="2.4" height="2.2" fill="#000" stroke="none"/><rect x="738.3" y="592" width="2.4" height="2.2" fill="#000" stroke="none"/><rect x="779.69" y="592" width="2.4" height="2.2" fill="#000" stroke="none"/><rect x="821.08" y="592" width="2.4" height="2.2" fill="#000" stroke="none"/><rect x="862.47" y="592" width="2.4" height="2.2" fill="#000" stroke="none"/><rect x="903.86" y="592" width="2.4" height="2.2" fill="#000" stroke="none"/><rect x="945.25" y="592" width="2.4" height="2.2" fill="#000" stroke="none"/><rect x="986.64" y="592" width="2.4" height="2.2" fill="#000" stroke="none"/><rect x="1028.03" y="592" width="2.4" height="2.2" fill="#000" stroke="none"/><rect x="1069.42" y="592" width="2.4" height="2.2" fill="#000" stroke="none"/><rect x="1110.81" y="592" width="2.4" height="2.2" fill="#000" stroke="none"/><rect x="1152.2" y="592" width="2.4" height="2.2" fill="#000" stroke="none"/><rect x="1193.59" y="592" width="2.4" height="2.2" fill="#000" stroke="none"/><rect x="1234.98" y="592" width="2.4" height="2.2" fill="#000" stroke="none"/><rect x="1276.37" y="592" width="2.4" height="2.2" fill="#000" stroke="none"/><rect x="1317.76" y="592" width="2.4" height="2.2" fill="#000" stroke="none"/><rect x="1359.15" y="592" width="2.4" height="2.2" fill="#000" stroke="none"/><rect x="1400.54" y="592" width="2.4" height="2.2" fill="#000" stroke="none"/><rect x="1441.93" y="592" width="2.4" height="2.2" fill="#000" stroke="none"/><rect x="1483.32" y="592" width="2.4" height="2.2" fill="#000" stroke="none"/><rect x="1524.71" y="592" width="2.4" height="2.2" fill="#000" stroke="none"/><rect x="1566.1" y="592" width="2.4" height="2.2" fill="#000" stroke="none"/><rect x="1607.49" y="592" width="2.4" height="2.2" fill="#000" stroke="none"/><rect x="1648.88" y="592" width="2.4" height="2.2" fill="#000" stroke="none"/><rect x="1690.27" y="592" width="2.4" height="2.2" fill="#000" stroke="none"/><rect x="1731.66" y="592" width="2.4" height="2.2" fill="#000" stroke="none"/><rect x="1773.05" y="592" width="2.4" height="2.2" fill="#000" stroke="none"/><rect x="1814.44" y="592" width="2.4" height="2.2" fill="#000" stroke="none"/><rect x="1855.83" y="592" width="2.4" height="2.2" fill="#000" stroke="none"/><rect x="1897.22" y="592" width="2.4" height="2.2" fill="#000" stroke="none"/><rect x="1938.61" y="592" width="2.4" height="2.2" fill="#000" stroke="none"/><rect x="303.4" y="114.2" width="1.6" height="2.4" fill="#000" stroke="none"/><rect x="303.4" y="155.59" width="1.6" height="2.4" fill="#000" stroke="none"/><rect x="303.4" y="196.98" width="1.6" height="2.4" fill="#000" stroke="none"/><rect x="303.4" y="238.37" width="1.6" height="2.4" fill="#000" stroke="none"/><rect x="303.4" y="279.76" width="1.6" height="2.4" fill="#000" stroke="none"/><rect x="303.4" y="321.15" width="1.6" height="2.4" fill="#000" stroke="none"/><rect x="303.4" y="362.54" width="1.6" height="2.4" fill="#000" stroke="none"/><rect x="303.4" y="403.93" width="1.6" height="2.4" fill="#000" stroke="none"/><rect x="303.4" y="445.32" width="1.6" height="2.4" fill="#000" stroke="none"/><rect x="303.4" y="486.71" width="1.6" height="2.4" fill="#000" stroke="none"/><rect x="303.4" y="528.1" width="1.6" height="2.4" fill="#000" stroke="none"/><rect x="303.4" y="569.49" width="1.6" height="2.4" fill="#000" stroke="none"/><path d="M308 116.3H463" stroke="#161616" stroke-width="3.8" stroke-linejoin="round"/><path d="M308 116.3H463" stroke="url(#h)" stroke-width="1.2" stroke-linejoin="round"/><path d="M308 282.4H463" stroke="#161616" stroke-width="3.6" stroke-linejoin="round"/><path d="M308 282.4H463" stroke="url(#h)" stroke-width="1.2" stroke-linejoin="round"/><path d="M462.1 144.5V168.5" stroke="#161616" stroke-width="3.8" stroke-linejoin="round"/><path d="M462.1 144.5V168.5" stroke="url(#h)" stroke-width="1.2" stroke-linejoin="round"/><path d="M462.1 235V253.2" stroke="#161616" stroke-width="3.8" stroke-linejoin="round"/><path d="M462.1 235V253.2" stroke="url(#h)" stroke-width="1.2" stroke-linejoin="round"/><path d="M462 168.5V235" stroke="#273a3a" stroke-width="3"/><path d="M436.8 105V111.2H462.8V118 M463.5 113.5V118.5" stroke="#222" stroke-width="1.2"/><path d="M436.5 120.6A24 24 0 0 0 460.5 144.6" stroke="#222" stroke-width="0.9"/><path d="M460.5 120.6H436.5" stroke="#222" stroke-width="1.8"/><path d="M436.5 279.6A24 24 0 0 1 460.5 255.6" stroke="#222" stroke-width="0.9"/><path d="M460.5 279.6H436.5" stroke="#222" stroke-width="1.8"/><path d="M436.5 285.5A24 24 0 0 0 460.5 309.5" stroke="#222" stroke-width="0.9"/><path d="M460.5 285.5H436.5" stroke="#222" stroke-width="1.8"/><path d="M355.3 134.6H420.3V259.4H355.3Z" stroke-width="1.1" stroke-dasharray="3.2 2.2"/><circle cx="461.8" cy="132.4" r="8.2" fill="#fff" stroke="#222" stroke-width="0.9"/><text x="455.2" y="135.24" font-size="7.9" fill="#262626" textLength="13.2" lengthAdjust="spacingAndGlyphs">246A</text><circle cx="461.8" cy="265.2" r="8.2" fill="#fff" stroke="#222" stroke-width="0.9"/><text x="455.2" y="268.04" font-size="7.9" fill="#262626" textLength="13.2" lengthAdjust="spacingAndGlyphs">246B</text><circle cx="461.8" cy="298.2" r="8.2" fill="#fff" stroke="#222" stroke-width="0.9"/><text x="456.13" y="301.04" font-size="7.9" fill="#262626" textLength="11.34" lengthAdjust="spacingAndGlyphs">245</text><text x="343.2" y="203.2" font-size="12.5" font-weight="700" fill="#111" textLength="89.8" lengthAdjust="spacingAndGlyphs" xml:space="preserve">CONFERENCE  246</text><text x="351.3" y="334.8" font-size="12.21" font-weight="700" fill="#111" textLength="66.3" lengthAdjust="spacingAndGlyphs" xml:space="preserve">MEETING  245</text><path d="M462 311V359Q462 374.6 447 373.7L308 363.2" stroke="#161616" stroke-width="3.4" stroke-linejoin="round"/><path d="M462 311V359Q462 374.6 447 373.7L308 363.2" stroke="url(#h)" stroke-width="1.2" stroke-linejoin="round"/><text x="673.6" y="200.2" font-size="12.5" font-weight="700" fill="#111" textLength="88.7" lengthAdjust="spacingAndGlyphs" xml:space="preserve">OPEN OFFICE  248</text><text x="406.8" y="484.2" font-size="12.21" font-weight="700" fill="#111" textLength="87.8" lengthAdjust="spacingAndGlyphs" xml:space="preserve">OPEN OFFICE  244</text>
<path d="M967.8 100V170 M967.8 228V296Q967.8 310.4 982 310.4H1046Q1060 310.4 1061.2 295.3H1079" stroke="#161616" stroke-width="4.4" stroke-linejoin="round"/><path d="M967.8 100V170 M967.8 228V296Q967.8 310.4 982 310.4H1046Q1060 310.4 1061.2 295.3H1079" stroke="url(#h)" stroke-width="1.8" stroke-linejoin="round"/><path d="M965.5 199.3H1079" stroke="#161616" stroke-width="3.6" stroke-linejoin="round"/><path d="M965.5 199.3H1079" stroke="url(#h)" stroke-width="1.2" stroke-linejoin="round"/><path d="M994 196.6A27.5 27.5 0 0 0 966.5 169.1" stroke="#222" stroke-width="0.9"/><path d="M966.5 196.6H994" stroke="#222" stroke-width="1.8"/><path d="M994 202.2A27.5 27.5 0 0 1 966.5 229.7" stroke="#222" stroke-width="0.9"/><path d="M966.5 202.2H994" stroke="#222" stroke-width="1.8"/><circle cx="966.9" cy="182.7" r="8.2" fill="#fff" stroke="#222" stroke-width="0.9"/><text x="961.23" y="185.54" font-size="7.9" fill="#262626" textLength="11.34" lengthAdjust="spacingAndGlyphs">249</text><circle cx="966.9" cy="215.7" r="8.2" fill="#fff" stroke="#222" stroke-width="0.9"/><text x="961.23" y="218.54" font-size="7.9" fill="#262626" textLength="11.34" lengthAdjust="spacingAndGlyphs">250</text><text x="988.8" y="146.7" font-size="12.21" font-weight="700" fill="#111" textLength="57.4" lengthAdjust="spacingAndGlyphs" xml:space="preserve">OFFICE  249</text><text x="993" y="270.7" font-size="12.21" font-weight="700" fill="#111" textLength="49.3" lengthAdjust="spacingAndGlyphs" xml:space="preserve">COPY  250</text><path d="M1063.4 201V296" stroke="#444"/><path d="M1061.3 296V345Q1061.3 357.6 1074 357.6H1098Q1110.2 357.6 1110.2 346V334" stroke="#161616" stroke-width="4" stroke-linejoin="round"/><path d="M1061.3 296V345Q1061.3 357.6 1074 357.6H1098Q1110.2 357.6 1110.2 346V334" stroke="url(#h)" stroke-width="1.4" stroke-linejoin="round"/><path d="M1083 133.8H1147" stroke-width="1.2"/><path d="M1083.5 140.9H1109" stroke-width="1.7" stroke-dasharray="3.6 2.2"/><path d="M1083.5 148.5H1109" stroke-width="1.7" stroke-dasharray="3.6 2.2"/><path d="M1083.5 156.1H1109" stroke-width="1.7" stroke-dasharray="3.6 2.2"/><path d="M1083.5 163.7H1109" stroke-width="1.7" stroke-dasharray="3.6 2.2"/><path d="M1083.5 171.3H1109" stroke-width="1.7" stroke-dasharray="3.6 2.2"/><path d="M1083.5 178.9H1109" stroke-width="1.7" stroke-dasharray="3.6 2.2"/><path d="M1083.5 186.5H1109" stroke-width="1.7" stroke-dasharray="3.6 2.2"/><path d="M1083.5 194.1H1109" stroke-width="1.7" stroke-dasharray="3.6 2.2"/><path d="M1108.7 134V195" stroke-width="1.4" stroke-dasharray="3.6 2.2"/><path d="M1083.5 194.2H1146" stroke-width="1.7" stroke-dasharray="3.6 2.2"/><path d="M1145.2 134V219" stroke-width="1.3" stroke-dasharray="3.2 2.2"/><path d="M1122 141.45H1145" stroke-width="1.2"/><path d="M1122 149.1H1145" stroke-width="1.2"/><path d="M1122 156.75H1145" stroke-width="1.2"/><path d="M1122 164.4H1145" stroke-width="1.2"/><path d="M1122 172.05H1145" stroke-width="1.2"/><path d="M1122 179.3H1146" stroke-width="1.6" stroke-dasharray="3.6 2.2"/><path d="M1122 186.8H1146" stroke-width="1.6" stroke-dasharray="3.6 2.2"/><path d="M1121.8 133.8V188" stroke-width="2.4"/><path d="M1133.4 134V171 M1130.2 167.5L1133.4 171L1136.6 167.5 M1121.5 185.2L1146.5 173.2 M1131.3 181.2l1.6-4l1.8 3.2" stroke-width="0.8"/><path d="M1112 192V196.5 M1117 192V196.5" stroke-width="2"/><path d="M1080.9 100V224" stroke="#000" stroke-width="4.6"/><path d="M1080.9 100V224" stroke="#fff" stroke-dasharray="3.4 12.8" stroke-dashoffset="4"/><path d="M1149.2 100V224" stroke="#000" stroke-width="4.6"/><path d="M1149.2 100V224" stroke="#fff" stroke-dasharray="3.4 12.8" stroke-dashoffset="4"/><path d="M1078.6 221.6H1151.5" stroke="#000" stroke-width="4.8"/><path d="M1078.6 221.6H1151.5" stroke="#fff" stroke-dasharray="3.4 12.8" stroke-dashoffset="4"/><text x="1091.4" y="113.3" font-size="12.21" font-weight="700" fill="#111" textLength="47.6" lengthAdjust="spacingAndGlyphs" xml:space="preserve">STAIR 251</text><text x="1129.2" y="130.7" font-size="8.6" fill="#333" textLength="9.8" lengthAdjust="spacingAndGlyphs">UP</text><path d="M1239.2 100V153.4" stroke="#161616" stroke-width="3.8" stroke-linejoin="round"/><path d="M1239.2 100V153.4" stroke="url(#h)" stroke-width="1.2" stroke-linejoin="round"/><path d="M1151.5 151.8H1241" stroke="#161616" stroke-width="3.6" stroke-linejoin="round"/><path d="M1151.5 151.8H1241" stroke="url(#h)" stroke-width="1.2" stroke-linejoin="round"/><path d="M1156.5 150V125.4h14.5V150" stroke="#333" stroke-dasharray="3 2"/><rect x="1157.2" y="150.4" width="13.2" height="3" fill="#777" stroke="none"/><path d="M1177.2 150V125.4h14.5V150" stroke="#333" stroke-dasharray="3 2"/><rect x="1177.9" y="150.4" width="13.2" height="3" fill="#777" stroke="none"/><path d="M1198.1 150V125.4h14.5V150" stroke="#333" stroke-dasharray="3 2"/><rect x="1198.8" y="150.4" width="13.2" height="3" fill="#777" stroke="none"/><path d="M1218.6 150V125.4h14.5V150" stroke="#333" stroke-dasharray="3 2"/><rect x="1219.3" y="150.4" width="13.2" height="3" fill="#777" stroke="none"/><text x="1188.1" y="118.3" font-size="11.92" font-weight="700" fill="#111" textLength="15.5" lengthAdjust="spacingAndGlyphs" xml:space="preserve">253</text><text x="1183.1" y="176.5" font-size="12.5" font-weight="700" fill="#111" textLength="73.7" lengthAdjust="spacingAndGlyphs" xml:space="preserve">STORAGE 253A</text><text x="1156.5" y="207.3" font-size="12.5" font-weight="700" fill="#111" textLength="73.3" lengthAdjust="spacingAndGlyphs" xml:space="preserve">STORAGE 254A</text><path d="M1205 209.5L1184.5 250.5" stroke-width="0.8"/><circle cx="1183.6" cy="252.3" r="2.2" fill="#111" stroke="none"/><path d="M1297 100L1302.6 132.6 M1312 100L1307 132.6 M1302.6 160.8L1294.5 213 M1306.4 160.8L1315.2 219" stroke-width="0.7"/><path d="M1315.2 100V222" stroke="#333" stroke-width="0.8"/><text x="1307.6" y="159.2" font-size="7.6" fill="#333" textLength="24.2" lengthAdjust="spacingAndGlyphs" transform="rotate(-90 1307.6 159.2)">VOID</text><path d="M1292.2 100V224" stroke="#000" stroke-width="4.4"/><path d="M1292.2 100V224" stroke="#fff" stroke-dasharray="3.4 12.8" stroke-dashoffset="4"/><path d="M1290 222.2H1331.4" stroke="#000" stroke-width="4.2"/><path d="M1290 222.2H1331.4" stroke="#fff" stroke-dasharray="3.4 12.8" stroke-dashoffset="4"/><path d="M1080.6 224V334 M1078.6 332.7H1120.3 M1144.6 332.7H1154" stroke="#161616" stroke-width="3.8" stroke-linejoin="round"/><path d="M1080.6 224V334 M1078.6 332.7H1120.3 M1144.6 332.7H1154" stroke="url(#h)" stroke-width="1.2" stroke-linejoin="round"/><path d="M1149.4 224V334" stroke="#161616" stroke-width="3.8" stroke-linejoin="round"/><path d="M1149.4 224V334" stroke="url(#h)" stroke-width="1.2" stroke-linejoin="round"/><path d="M1083 273.4H1101.3V331" stroke="#333"/><path d="M1083 276.6H1100V293.4H1083" stroke="#444" stroke-dasharray="4 2.4"/><rect x="1085.2" y="297.8" width="12.4" height="16.8" rx="1.2" fill="#fff" stroke="#111" stroke-width="1.2"/><path d="M1087.4 300.2H1095.6V312.4H1087.4Z M1091.4 306.3H1087.6" stroke-width="1.3"/><path d="M1144.6 307.1A24.4 24.4 0 0 0 1120.2 331.5" stroke="#222" stroke-width="0.9"/><path d="M1144.6 331.5V307.1" stroke="#222" stroke-width="1.8"/><circle cx="1132.1" cy="333.2" r="8.2" fill="#fff" stroke="#222" stroke-width="0.9"/><text x="1126.43" y="336.04" font-size="7.9" fill="#262626" textLength="11.34" lengthAdjust="spacingAndGlyphs">252</text><text x="1120.7" y="319.2" font-size="12.6" font-weight="700" fill="#111" textLength="88" lengthAdjust="spacingAndGlyphs" transform="rotate(-90 1120.7 319.2)">MOTHER'S RM 252</text><rect x="1215.8" y="225.3" width="5.6" height="4.6" rx="1" fill="#fff" stroke="#222" stroke-width="0.9"/><circle cx="1218.6" cy="236.9" r="6" fill="#fff" stroke="#222" stroke-width="1.3"/><circle cx="1218.6" cy="236.9" r="3.1" fill="#fff" stroke="#333" stroke-width="1.5"/><rect x="1240.9" y="225.3" width="5.6" height="4.6" rx="1" fill="#fff" stroke="#222" stroke-width="0.9"/><circle cx="1243.7" cy="236.9" r="6" fill="#fff" stroke="#222" stroke-width="1.3"/><circle cx="1243.7" cy="236.9" r="3.1" fill="#fff" stroke="#333" stroke-width="1.5"/><rect x="1266.8" y="225.3" width="5.6" height="4.6" rx="1" fill="#fff" stroke="#222" stroke-width="0.9"/><circle cx="1269.6" cy="236.9" r="6" fill="#fff" stroke="#222" stroke-width="1.3"/><circle cx="1269.6" cy="236.9" r="3.1" fill="#fff" stroke="#333" stroke-width="1.5"/><rect x="1311.7" y="225.3" width="5.6" height="4.6" rx="1" fill="#fff" stroke="#222" stroke-width="0.9"/><circle cx="1314.5" cy="236.9" r="6" fill="#fff" stroke="#222" stroke-width="1.3"/><circle cx="1314.5" cy="236.9" r="3.1" fill="#fff" stroke="#333" stroke-width="1.5"/><path d="M1230.8 224.5V266h2.4V224.5"/><path d="M1256.5 224.5V266h2.4V224.5"/><path d="M1207.5 265.5V252Q1208.5 248.5 1218 250.6" stroke-width="1.1"/><path d="M1223.1 257l2.6 8.6h4" stroke-width="1.1"/><path d="M1233.5 265.5V252Q1234.5 248.5 1244 250.6" stroke-width="1.1"/><path d="M1249.1 257l2.6 8.6h4" stroke-width="1.1"/><path d="M1259.3 265.5V252Q1260.3 248.5 1269.8 250.6" stroke-width="1.1"/><path d="M1274.9 257l2.6 8.6h4" stroke-width="1.1"/><text x="1191" y="299.8" font-size="12.06" font-weight="700" fill="#111" textLength="73.2" lengthAdjust="spacingAndGlyphs" xml:space="preserve">WOMEN'S RR  254</text><circle cx="1166" cy="333.2" r="8.2" fill="#fff" stroke="#222" stroke-width="0.9"/><text x="1160.33" y="336.04" font-size="7.9" fill="#262626" textLength="11.34" lengthAdjust="spacingAndGlyphs">254</text><circle cx="1166" cy="279.5" r="8.2" fill="#fff" stroke="#222" stroke-width="0.9"/><text x="1159.4" y="282.34" font-size="7.9" fill="#262626" textLength="13.2" lengthAdjust="spacingAndGlyphs">254A</text><circle cx="1292" cy="294" r="8.2" fill="#fff" stroke="#222" stroke-width="0.9"/><text x="1285.4" y="296.84" font-size="7.9" fill="#262626" textLength="13.2" lengthAdjust="spacingAndGlyphs">254B</text><rect x="1339.8" y="101" width="49.8" height="57.6" fill="#fff" stroke="#111" stroke-width="1.5"/><path d="M1339.8 101L1389.6 158.6 M1339.8 158.6L1389.6 101" stroke-width="0.8"/><path d="M1339.8 158.2H1389.6" stroke-width="2"/><rect x="1339.8" y="165.6" width="49.8" height="66.4" fill="#fff" stroke="#111" stroke-width="1.5"/><path d="M1339.8 165.6L1389.6 232 M1339.8 232L1389.6 165.6" stroke-width="0.8"/><path d="M1339.8 231.6H1389.6" stroke-width="2"/><path d="M1333 236.8H1392"/><rect x="1364.6" y="245.8" width="21.4" height="20.6" fill="#fff" stroke="#111" stroke-width="1"/><path d="M1364.6 266.4L1386 245.8" stroke-width="0.8"/><rect x="1344.2" y="269.6" width="41.8" height="34.6" fill="#fff" stroke="#111" stroke-width="1.1"/><path d="M1344.2 269.6L1386 304.2 M1344.2 304.2L1386 269.6" stroke-width="0.8"/><path d="M1395.6 100V311" stroke="#000" stroke-width="4.6"/><path d="M1395.6 100V311" stroke="#fff" stroke-dasharray="3.4 12.8" stroke-dashoffset="4"/><path d="M1328.9 100V311" stroke="#000" stroke-width="4.6"/><path d="M1328.9 100V311" stroke="#fff" stroke-dasharray="3.4 12.8" stroke-dashoffset="4"/><path d="M1326.6 242.8H1397.9" stroke="#000" stroke-width="4.4"/><path d="M1326.6 242.8H1397.9" stroke="#fff" stroke-dasharray="3.4 12.8" stroke-dashoffset="4"/><path d="M1326.6 310H1397.9" stroke="#000" stroke-width="4.6"/><path d="M1326.6 310H1397.9" stroke="#fff" stroke-dasharray="3.4 12.8" stroke-dashoffset="4"/><path d="M1396.3 311Q1395 333.5 1372 336.3L1190 350.6Q1188.6 350.6 1188.6 346V334" stroke="#161616" stroke-width="3.6" stroke-linejoin="round"/><path d="M1396.3 311Q1395 333.5 1372 336.3L1190 350.6Q1188.6 350.6 1188.6 346V334" stroke="url(#h)" stroke-width="1.2" stroke-linejoin="round"/><path d="M1151.5 222.4H1327" stroke="#161616" stroke-width="3.8" stroke-linejoin="round"/><path d="M1151.5 222.4H1327" stroke="url(#h)" stroke-width="1.2" stroke-linejoin="round"/><path d="M1283.9 224V281.4" stroke="#161616" stroke-width="3.8" stroke-linejoin="round"/><path d="M1283.9 224V281.4" stroke="url(#h)" stroke-width="1.2" stroke-linejoin="round"/><path d="M1283.9 305.8V333 M1282 310.3H1326.6" stroke="#161616" stroke-width="3.8" stroke-linejoin="round"/><path d="M1283.9 305.8V333 M1282 310.3H1326.6" stroke="url(#h)" stroke-width="1.2" stroke-linejoin="round"/><path d="M1285.7 332.8H1178" stroke="#161616" stroke-width="3.6" stroke-linejoin="round"/><path d="M1285.7 332.8H1178" stroke="url(#h)" stroke-width="1.2" stroke-linejoin="round"/><path d="M1310.7 305.8A25 25 0 0 0 1285.7 280.8" stroke="#222" stroke-width="0.9"/><path d="M1285.7 305.8H1310.7" stroke="#222" stroke-width="1.8"/><path d="M1286 306H1310.7" stroke="#666" stroke-width="2.2"/><path d="M1204.8 224V279.8H1178.5" stroke="#161616" stroke-width="3.8" stroke-linejoin="round"/><path d="M1204.8 224V279.8H1178.5" stroke="url(#h)" stroke-width="1.2" stroke-linejoin="round"/><path d="M1151.5 240H1167.8V224.4"/><path d="M1204.8 311.5V333" stroke="#161616" stroke-width="3.8" stroke-linejoin="round"/><path d="M1204.8 311.5V333" stroke="url(#h)" stroke-width="1.2" stroke-linejoin="round"/><path d="M1206.5 312H1282" stroke-width="1.1"/><rect x="1218.6" y="313.5" width="16.8" height="13" rx="1.2" fill="#fff" stroke="#111" stroke-width="1.2"/><rect x="1220.5" y="315.4" width="13" height="8.4" fill="none" stroke="#111" stroke-width="1.4"/><path d="M1227 319.7v4.4 M1227 320.1h3" stroke-width="1.3"/><rect x="1253" y="313.5" width="16.8" height="13" rx="1.2" fill="#fff" stroke="#111" stroke-width="1.2"/><rect x="1254.9" y="315.4" width="13" height="8.4" fill="none" stroke="#111" stroke-width="1.4"/><path d="M1261.4 319.7v4.4 M1261.4 320.1h3" stroke-width="1.3"/><path d="M1154 306A24.6 24.6 0 0 0 1178.6 281.4" stroke="#222" stroke-width="0.9"/><path d="M1154 281.4V306" stroke="#222" stroke-width="1.8"/><path d="M1154 306.9A24.6 24.6 0 0 1 1178.6 331.5" stroke="#222" stroke-width="0.9"/><path d="M1154 331.5V306.9" stroke="#222" stroke-width="1.8"/><path d="M1153.8 281.4V331.5" stroke="#555" stroke-width="2.4"/><text x="1418.7" y="184.4" font-size="12.5" font-weight="700" fill="#111" textLength="55.7" lengthAdjust="spacingAndGlyphs" xml:space="preserve">LOBBY  256</text><path d="M1330 350L1346.5 373.2H1393" stroke-width="0.8"/><circle cx="1376.5" cy="373.2" r="16.4" fill="#fff" stroke="#222" stroke-width="0.9"/><path d="M1360.1 373.2H1392.9" stroke-width="0.8"/><text x="1374.7" y="371.2" font-size="7.4" fill="#333">1</text><text x="1364.6" y="382.2" font-size="7.6" fill="#333" textLength="23.6" lengthAdjust="spacingAndGlyphs">A6.02</text><path d="M1111 357.2L1189 348.6" stroke="#333" stroke-dasharray="3.5 2.5"/><path d="M1076 366V222Q1076 212.2 1086 212.2H1326Q1335.8 212.2 1335.8 224V340Q1335.8 349.6 1326 350.4L1088 368.6Q1076 369.4 1076 358" stroke="#0a0a0a" stroke-width="2.7" stroke-dasharray="12 4.6"/>
<rect x="1496.9" y="101" width="49.8" height="57.6" fill="#fff" stroke="#111" stroke-width="1.5"/><path d="M1496.9 101L1546.7 158.6 M1496.9 158.6L1546.7 101" stroke-width="0.8"/><path d="M1496.9 158.2H1546.7" stroke-width="2"/><rect x="1496.9" y="165.6" width="49.8" height="66.4" fill="#fff" stroke="#111" stroke-width="1.5"/><path d="M1496.9 165.6L1546.7 232 M1496.9 232L1546.7 165.6" stroke-width="0.8"/><path d="M1496.9 231.6H1546.7" stroke-width="2"/><path d="M1553.5 236.8H1494.5"/><rect x="1500.5" y="269.6" width="41.8" height="34.6" fill="#fff" stroke="#111" stroke-width="1.1"/><path d="M1500.5 304.2L1542.3 269.6" stroke-width="0.8"/><path d="M1490.9 100V311" stroke="#000" stroke-width="4.6"/><path d="M1490.9 100V311" stroke="#fff" stroke-dasharray="3.4 12.8" stroke-dashoffset="4"/><path d="M1557.6 100V311" stroke="#000" stroke-width="4.6"/><path d="M1557.6 100V311" stroke="#fff" stroke-dasharray="3.4 12.8" stroke-dashoffset="4"/><path d="M1559.9 242.8H1488.6" stroke="#000" stroke-width="4.4"/><path d="M1559.9 242.8H1488.6" stroke="#fff" stroke-dasharray="3.4 12.8" stroke-dashoffset="4"/><path d="M1559.9 310H1488.6" stroke="#000" stroke-width="4.6"/><path d="M1559.9 310H1488.6" stroke="#fff" stroke-dasharray="3.4 12.8" stroke-dashoffset="4"/><path d="M1490.2 311Q1491.5 333.5 1514.5 336.3L1696.5 350.6Q1697.9 350.6 1697.9 346V334" stroke="#161616" stroke-width="3.6" stroke-linejoin="round"/><path d="M1490.2 311Q1491.5 333.5 1514.5 336.3L1696.5 350.6Q1697.9 350.6 1697.9 346V334" stroke="url(#h)" stroke-width="1.2" stroke-linejoin="round"/><path d="M1735 222.4H1559.5" stroke="#161616" stroke-width="3.8" stroke-linejoin="round"/><path d="M1735 222.4H1559.5" stroke="url(#h)" stroke-width="1.2" stroke-linejoin="round"/><path d="M1602.6 224V281.4" stroke="#161616" stroke-width="3.8" stroke-linejoin="round"/><path d="M1602.6 224V281.4" stroke="url(#h)" stroke-width="1.2" stroke-linejoin="round"/><path d="M1602.6 305.8V333M1604.5 310.3H1559.9" stroke="#161616" stroke-width="3.8" stroke-linejoin="round"/><path d="M1602.6 305.8V333M1604.5 310.3H1559.9" stroke="url(#h)" stroke-width="1.2" stroke-linejoin="round"/><path d="M1600.8 332.8H1708.5" stroke="#161616" stroke-width="3.6" stroke-linejoin="round"/><path d="M1600.8 332.8H1708.5" stroke="url(#h)" stroke-width="1.2" stroke-linejoin="round"/><path d="M1575.8 305.8A25 25 0 0 1 1600.8 280.8" stroke="#222" stroke-width="0.9"/><path d="M1600.8 305.8H1575.8" stroke="#222" stroke-width="1.8"/><path d="M1600.5 306H1575.8" stroke="#666" stroke-width="2.2"/><path d="M1681.7 224V279.8H1708" stroke="#161616" stroke-width="3.8" stroke-linejoin="round"/><path d="M1681.7 224V279.8H1708" stroke="url(#h)" stroke-width="1.2" stroke-linejoin="round"/><path d="M1735 240H1718.7V224.4"/><path d="M1681.7 311.5V333" stroke="#161616" stroke-width="3.8" stroke-linejoin="round"/><path d="M1681.7 311.5V333" stroke="url(#h)" stroke-width="1.2" stroke-linejoin="round"/><path d="M1680 312H1604.5" stroke-width="1.1"/><rect x="1651.1" y="313.5" width="16.8" height="13" rx="1.2" fill="#fff" stroke="#111" stroke-width="1.2"/><rect x="1653" y="315.4" width="13" height="8.4" fill="none" stroke="#111" stroke-width="1.4"/><path d="M1659.5 319.7v4.4 M1659.5 320.1h3" stroke-width="1.3"/><rect x="1616.7" y="313.5" width="16.8" height="13" rx="1.2" fill="#fff" stroke="#111" stroke-width="1.2"/><rect x="1618.6" y="315.4" width="13" height="8.4" fill="none" stroke="#111" stroke-width="1.4"/><path d="M1625.1 319.7v4.4 M1625.1 320.1h3" stroke-width="1.3"/><path d="M1732.5 306A24.6 24.6 0 0 1 1707.9 281.4" stroke="#222" stroke-width="0.9"/><path d="M1732.5 281.4V306" stroke="#222" stroke-width="1.8"/><path d="M1732.5 306.9A24.6 24.6 0 0 0 1707.9 331.5" stroke="#222" stroke-width="0.9"/><path d="M1732.5 331.5V306.9" stroke="#222" stroke-width="1.8"/><path d="M1732.7 281.4V331.5" stroke="#555" stroke-width="2.4"/><path d="M1575.2 100V190h38.9V100 M1575.2 128.6h38.9 M1575.2 159.2h38.9" stroke="#333" stroke-dasharray="3.4 2.2"/><path d="M1586.5 100V190 M1603 100V190 M1582.7 128.6h24 M1582.7 159.2h24 M1585.7 190h18" stroke="#222" stroke-width="1.2"/><path d="M1624.3 100V190h38.9V100 M1624.3 128.6h38.9 M1624.3 159.2h38.9" stroke="#333" stroke-dasharray="3.4 2.2"/><path d="M1635.6 100V190 M1652.1 100V190 M1631.8 128.6h24 M1631.8 159.2h24 M1634.8 190h18" stroke="#222" stroke-width="1.2"/><path d="M1673.6 100V190h38.9V100 M1673.6 128.6h38.9 M1673.6 159.2h38.9" stroke="#333" stroke-dasharray="3.4 2.2"/><path d="M1684.9 100V190 M1701.4 100V190 M1681.1 128.6h24 M1681.1 159.2h24 M1684.1 190h18" stroke="#222" stroke-width="1.2"/><text x="1618.8" y="213" font-size="12.5" font-weight="700" fill="#111" textLength="74.3" lengthAdjust="spacingAndGlyphs" xml:space="preserve">STORAGE 258A</text><path d="M1683.5 215.5L1706.6 248.6" stroke-width="0.8"/><circle cx="1707.4" cy="250.2" r="2.2" fill="#111" stroke="none"/><path d="M1733 222.4H1739" stroke="#161616" stroke-width="3.8" stroke-linejoin="round"/><path d="M1733 222.4H1739" stroke="url(#h)" stroke-width="1.2" stroke-linejoin="round"/><rect x="1569.6" y="225.3" width="5.6" height="4.6" rx="1" fill="#fff" stroke="#222" stroke-width="0.9"/><circle cx="1572.4" cy="236.9" r="6" fill="#fff" stroke="#222" stroke-width="1.3"/><circle cx="1572.4" cy="236.9" r="3.1" fill="#fff" stroke="#333" stroke-width="1.5"/><rect x="1614.4" y="225.3" width="5.6" height="4.6" rx="1" fill="#fff" stroke="#222" stroke-width="0.9"/><circle cx="1617.2" cy="236.9" r="6" fill="#fff" stroke="#222" stroke-width="1.3"/><circle cx="1617.2" cy="236.9" r="3.1" fill="#fff" stroke="#333" stroke-width="1.5"/><path d="M1627.8 224.5V266.4" stroke-width="2.8"/><path d="M1627 249Q1622 247.4 1617.4 250.6 M1611.6 257l-2.6 8.6h-4" stroke-width="1.1"/><path d="M1637.7 225v2.6a3.9 3.9 0 0 0 7.8 0V225z" fill="#fff" stroke="#333" stroke-width="1"/><path d="M1662.8 225v2.6a3.9 3.9 0 0 0 7.8 0V225z" fill="#fff" stroke="#333" stroke-width="1"/><path d="M1631.4 230.6V263.2H1652.6V230.6 M1677.8 230.6V263.2H1656.4V230.6" stroke="#333" stroke-width="1.3" stroke-dasharray="5.4 3"/><text x="1624" y="299.6" font-size="12.06" font-weight="700" fill="#111" textLength="69.3" lengthAdjust="spacingAndGlyphs" xml:space="preserve">MEN'S RR  258</text><circle cx="1594.9" cy="294" r="8.2" fill="#fff" stroke="#222" stroke-width="0.9"/><text x="1588.3" y="296.84" font-size="7.9" fill="#262626" textLength="13.2" lengthAdjust="spacingAndGlyphs">258B</text><circle cx="1721" cy="279.5" r="8.2" fill="#fff" stroke="#222" stroke-width="0.9"/><text x="1714.4" y="282.34" font-size="7.9" fill="#262626" textLength="13.2" lengthAdjust="spacingAndGlyphs">258A</text><circle cx="1721" cy="333.2" r="8.2" fill="#fff" stroke="#222" stroke-width="0.9"/><text x="1715.33" y="336.04" font-size="7.9" fill="#262626" textLength="11.34" lengthAdjust="spacingAndGlyphs">258</text><path d="M1739.8 100V334 M1806.6 100V334 M1737.6 176.4H1808.7 M1808.7 332.8H1768 M1733.8 332.8H1745" stroke="#161616" stroke-width="3.8" stroke-linejoin="round"/><path d="M1739.8 100V334 M1806.6 100V334 M1737.6 176.4H1808.7 M1808.7 332.8H1768 M1733.8 332.8H1745" stroke="url(#h)" stroke-width="1.2" stroke-linejoin="round"/><path d="M1777 334V352" stroke="#161616" stroke-width="3.6" stroke-linejoin="round"/><path d="M1777 334V352" stroke="url(#h)" stroke-width="1.2" stroke-linejoin="round"/><path d="M1742 180.3H1804.5V264 M1742 180.3V264" stroke-width="2.2" stroke-dasharray="3.6 2.2"/><path d="M1742.5 204H1768" stroke-width="1.7" stroke-dasharray="3.6 2.2"/><path d="M1742.5 211.5H1768" stroke-width="1.7" stroke-dasharray="3.6 2.2"/><path d="M1742.5 219H1768" stroke-width="1.7" stroke-dasharray="3.6 2.2"/><path d="M1742.5 227.5H1768" stroke-width="1.7" stroke-dasharray="3.6 2.2"/><path d="M1742.5 235H1768" stroke-width="1.7" stroke-dasharray="3.6 2.2"/><path d="M1742.5 242.5H1768" stroke-width="1.7" stroke-dasharray="3.6 2.2"/><path d="M1742.5 250H1768" stroke-width="1.7" stroke-dasharray="3.6 2.2"/><path d="M1742.5 257.6H1768" stroke-width="1.7" stroke-dasharray="3.6 2.2"/><path d="M1768.3 204V264 M1779 204V222" stroke-width="1.5" stroke-dasharray="3.6 2.2"/><path d="M1779 204H1804" stroke-width="1.6" stroke-dasharray="3.6 2.2"/><path d="M1779 211.5H1804" stroke-width="1.6" stroke-dasharray="3.6 2.2"/><path d="M1779 225.8H1804" stroke-width="1.2"/><path d="M1779 233.5H1804" stroke-width="1.2"/><path d="M1779 241.2H1804" stroke-width="1.2"/><path d="M1779 248.9H1804" stroke-width="1.2"/><path d="M1779 256.6H1804" stroke-width="1.2"/><path d="M1779 264.3H1804" stroke-width="1.2"/><path d="M1742 264.2H1804.5" stroke-width="1.3"/><path d="M1779.2 222V264" stroke-width="2.4"/><path d="M1791.2 227.5V264 M1788 231L1791.2 227.5L1794.4 231 M1779 223.5L1804.5 212 M1789 220l1.6-4l1.8 3.2" stroke-width="0.8"/><text x="1785.8" y="274" font-size="8.6" fill="#333" textLength="9.6" lengthAdjust="spacingAndGlyphs">UP</text><text x="1748" y="300" font-size="12.06" font-weight="700" fill="#111" textLength="50.8" lengthAdjust="spacingAndGlyphs" xml:space="preserve">STAIR  259</text><text x="1777.6" y="159" font-size="12.6" font-weight="700" fill="#111" textLength="47.2" lengthAdjust="spacingAndGlyphs" transform="rotate(-90 1777.6 159)">STORAGE</text><path d="M1743.8 307.1A24.4 24.4 0 0 1 1768.2 331.5" stroke="#222" stroke-width="0.9"/><path d="M1743.8 331.5V307.1" stroke="#222" stroke-width="1.8"/><circle cx="1756" cy="333.1" r="8.2" fill="#fff" stroke="#222" stroke-width="0.9"/><text x="1750.33" y="335.94" font-size="7.9" fill="#262626" textLength="11.34" lengthAdjust="spacingAndGlyphs">259</text><path d="M1697.5 348.6L1777 358" stroke="#333" stroke-dasharray="3.5 2.5"/><path d="M1921 199.3H1807.5" stroke="#161616" stroke-width="3.6" stroke-linejoin="round"/><path d="M1921 199.3H1807.5" stroke="url(#h)" stroke-width="1.2" stroke-linejoin="round"/><path d="M1876.5 310.4H1840.5Q1826.5 310.4 1825.3 295.3H1807.5" stroke="#161616" stroke-width="3.8" stroke-linejoin="round"/><path d="M1876.5 310.4H1840.5Q1826.5 310.4 1825.3 295.3H1807.5" stroke="url(#h)" stroke-width="1.2" stroke-linejoin="round"/><path d="M1825.2 296V345Q1825.2 357.6 1812.5 357.6H1788.5Q1776.3 357.6 1776.3 346V334" stroke="#161616" stroke-width="4" stroke-linejoin="round"/><path d="M1825.2 296V345Q1825.2 357.6 1812.5 357.6H1788.5Q1776.3 357.6 1776.3 346V334" stroke="url(#h)" stroke-width="1.4" stroke-linejoin="round"/><path d="M1823.4 201V296" stroke="#444"/><text x="1840.3" y="142.8" font-size="12.21" font-weight="700" fill="#111" textLength="36.3" lengthAdjust="spacingAndGlyphs" xml:space="preserve">OFFICE</text><text x="1844.6" y="256.3" font-size="12.21" font-weight="700" fill="#111" textLength="27.8" lengthAdjust="spacingAndGlyphs" xml:space="preserve">COPY</text><path d="M1826.5 105V296 M1826.5 334.3H1864" stroke="#444" stroke-width="1.25" stroke-dasharray="3.1 2.2"/>
<path d="M308 365.3L780 401.27" stroke="#222" stroke-width="1.1"/><path d="M780 401.27L1319 442.34" stroke="#333" stroke-dasharray="3.5 2.5"/><path d="M1568 442.3L1864 419.74" stroke="#333" stroke-dasharray="3.5 2.5"/><path d="M1273 602V437Q1273 424.8 1285 424.8H1604Q1616.5 424.8 1616.5 437V602" stroke="#0a0a0a" stroke-width="2.7" stroke-dasharray="12 4.6"/><path d="M647.5 393.27L746 400.78" stroke="#1c1c1c" stroke-width="3.3"/><path d="M649 394.28L744.5 401.56" stroke="#999" stroke-width="0.6" stroke-dasharray="5 3"/><path d="M615.5 590V407.83Q615.5 391.33 632 392.59L649 393.88M744.5 401.16L764.5 402.69Q781 403.94 781 420.44V458 M781 517V590" stroke="#161616" stroke-width="4.7" stroke-linejoin="round"/><path d="M615.5 590V407.83Q615.5 391.33 632 392.59L649 393.88M744.5 401.16L764.5 402.69Q781 403.94 781 420.44V458 M781 517V590" stroke="url(#h)" stroke-width="2.1" stroke-linejoin="round"/><path d="M613.1 487.6H783.4" stroke="#161616" stroke-width="5.6" stroke-linejoin="round"/><path d="M613.1 487.6H783.4" stroke="url(#h)" stroke-width="3" stroke-linejoin="round"/><path d="M755.4 482.1A25 25 0 0 1 780.4 457.1" stroke="#222" stroke-width="0.9"/><path d="M780.4 482.1H755.4" stroke="#222" stroke-width="1.8"/><path d="M755.4 492.8A25 25 0 0 0 780.4 517.8" stroke="#222" stroke-width="0.9"/><path d="M780.4 492.8H755.4" stroke="#222" stroke-width="1.8"/><circle cx="781.3" cy="470.8" r="8.2" fill="#fff" stroke="#222" stroke-width="0.9"/><text x="775.63" y="473.64" font-size="7.9" fill="#262626" textLength="11.34" lengthAdjust="spacingAndGlyphs">242</text><circle cx="781.3" cy="504.4" r="8.2" fill="#fff" stroke="#222" stroke-width="0.9"/><text x="775.63" y="507.24" font-size="7.9" fill="#262626" textLength="11.34" lengthAdjust="spacingAndGlyphs">243</text><text x="669" y="445.8" font-size="12.35" font-weight="700" fill="#111" textLength="57.5" lengthAdjust="spacingAndGlyphs" xml:space="preserve">OFFICE  242</text><text x="669" y="535" font-size="12.35" font-weight="700" fill="#111" textLength="57.5" lengthAdjust="spacingAndGlyphs" xml:space="preserve">OFFICE  243</text><path d="M896.2 412.22L994.9 419.74" stroke="#1c1c1c" stroke-width="3.3"/><path d="M897.7 413.24L993.4 420.53" stroke="#999" stroke-width="0.6" stroke-dasharray="5 3"/><path d="M864.2 590V534.1 M864.2 475.1V426.78Q864.2 410.28 880.7 411.54L897.7 412.84M993.4 420.13L1013.4 421.65Q1029.9 422.91 1029.9 439.41V475.1 M1029.9 534.1V590" stroke="#161616" stroke-width="4.7" stroke-linejoin="round"/><path d="M864.2 590V534.1 M864.2 475.1V426.78Q864.2 410.28 880.7 411.54L897.7 412.84M993.4 420.13L1013.4 421.65Q1029.9 422.91 1029.9 439.41V475.1 M1029.9 534.1V590" stroke="url(#h)" stroke-width="2.1" stroke-linejoin="round"/><path d="M946.7 590V417.57" stroke="#161616" stroke-width="4.7" stroke-linejoin="round"/><path d="M946.7 590V417.57" stroke="url(#h)" stroke-width="2.1" stroke-linejoin="round"/><path d="M861.8 504.7H1032.3" stroke="#161616" stroke-width="5.6" stroke-linejoin="round"/><path d="M861.8 504.7H1032.3" stroke="url(#h)" stroke-width="3" stroke-linejoin="round"/><path d="M889.8 499.2A25 25 0 0 0 864.8 474.2" stroke="#222" stroke-width="0.9"/><path d="M864.8 499.2H889.8" stroke="#222" stroke-width="1.8"/><path d="M889.8 509.9A25 25 0 0 1 864.8 534.9" stroke="#222" stroke-width="0.9"/><path d="M864.8 509.9H889.8" stroke="#222" stroke-width="1.8"/><circle cx="863.9" cy="487.9" r="8.2" fill="#fff" stroke="#222" stroke-width="0.9"/><text x="858.23" y="490.74" font-size="7.9" fill="#262626" textLength="11.34" lengthAdjust="spacingAndGlyphs">240</text><circle cx="863.9" cy="521.5" r="8.2" fill="#fff" stroke="#222" stroke-width="0.9"/><text x="858.23" y="524.34" font-size="7.9" fill="#262626" textLength="11.34" lengthAdjust="spacingAndGlyphs">241</text><path d="M1004.3 499.2A25 25 0 0 1 1029.3 474.2" stroke="#222" stroke-width="0.9"/><path d="M1029.3 499.2H1004.3" stroke="#222" stroke-width="1.8"/><path d="M1004.3 509.9A25 25 0 0 0 1029.3 534.9" stroke="#222" stroke-width="0.9"/><path d="M1029.3 509.9H1004.3" stroke="#222" stroke-width="1.8"/><circle cx="1030.2" cy="487.9" r="8.2" fill="#fff" stroke="#222" stroke-width="0.9"/><text x="1024.53" y="490.74" font-size="7.9" fill="#262626" textLength="11.34" lengthAdjust="spacingAndGlyphs">238</text><circle cx="1030.2" cy="521.5" r="8.2" fill="#fff" stroke="#222" stroke-width="0.9"/><text x="1024.53" y="524.34" font-size="7.9" fill="#262626" textLength="11.34" lengthAdjust="spacingAndGlyphs">239</text><text x="876.3" y="460.4" font-size="12.35" font-weight="700" fill="#111" textLength="57.1" lengthAdjust="spacingAndGlyphs" xml:space="preserve">OFFICE  240</text><text x="959.5" y="460.4" font-size="12.35" font-weight="700" fill="#111" textLength="57.5" lengthAdjust="spacingAndGlyphs" xml:space="preserve">OFFICE  238</text><text x="876.3" y="549.8" font-size="12.35" font-weight="700" fill="#111" textLength="57.1" lengthAdjust="spacingAndGlyphs" xml:space="preserve">OFFICE  241</text><text x="959.5" y="549.8" font-size="12.35" font-weight="700" fill="#111" textLength="57.5" lengthAdjust="spacingAndGlyphs" xml:space="preserve">OFFICE  239</text><path d="M1144.7 431.16L1242.2 438.59" stroke="#1c1c1c" stroke-width="3.3"/><path d="M1146.2 432.17L1240.7 439.37" stroke="#999" stroke-width="0.6" stroke-dasharray="5 3"/><path d="M1112.7 590V533.7 M1112.7 474.7V445.72Q1112.7 429.22 1129.2 430.48L1146.2 431.77M1240.7 438.97L1260.7 440.5Q1277.2 441.75 1277.2 458.25V474.7 M1277.2 533.7V590" stroke="#161616" stroke-width="4.7" stroke-linejoin="round"/><path d="M1112.7 590V533.7 M1112.7 474.7V445.72Q1112.7 429.22 1129.2 430.48L1146.2 431.77M1240.7 438.97L1260.7 440.5Q1277.2 441.75 1277.2 458.25V474.7 M1277.2 533.7V590" stroke="url(#h)" stroke-width="2.1" stroke-linejoin="round"/><path d="M1195.2 590V436.5" stroke="#161616" stroke-width="4.7" stroke-linejoin="round"/><path d="M1195.2 590V436.5" stroke="url(#h)" stroke-width="2.1" stroke-linejoin="round"/><path d="M1110.3 504.3H1279.6" stroke="#161616" stroke-width="5.6" stroke-linejoin="round"/><path d="M1110.3 504.3H1279.6" stroke="url(#h)" stroke-width="3" stroke-linejoin="round"/><path d="M1138.3 498.8A25 25 0 0 0 1113.3 473.8" stroke="#222" stroke-width="0.9"/><path d="M1113.3 498.8H1138.3" stroke="#222" stroke-width="1.8"/><path d="M1138.3 509.5A25 25 0 0 1 1113.3 534.5" stroke="#222" stroke-width="0.9"/><path d="M1113.3 509.5H1138.3" stroke="#222" stroke-width="1.8"/><circle cx="1112.4" cy="487.5" r="8.2" fill="#fff" stroke="#222" stroke-width="0.9"/><text x="1106.73" y="490.34" font-size="7.9" fill="#262626" textLength="11.34" lengthAdjust="spacingAndGlyphs">236</text><circle cx="1112.4" cy="521.1" r="8.2" fill="#fff" stroke="#222" stroke-width="0.9"/><text x="1106.73" y="523.94" font-size="7.9" fill="#262626" textLength="11.34" lengthAdjust="spacingAndGlyphs">237</text><path d="M1251.6 498.8A25 25 0 0 1 1276.6 473.8" stroke="#222" stroke-width="0.9"/><path d="M1276.6 498.8H1251.6" stroke="#222" stroke-width="1.8"/><path d="M1251.6 509.5A25 25 0 0 0 1276.6 534.5" stroke="#222" stroke-width="0.9"/><path d="M1276.6 509.5H1251.6" stroke="#222" stroke-width="1.8"/><circle cx="1284.8" cy="487.5" r="8.2" fill="#fff" stroke="#222" stroke-width="0.9"/><text x="1279.13" y="490.34" font-size="7.9" fill="#262626" textLength="11.34" lengthAdjust="spacingAndGlyphs">234</text><circle cx="1284.8" cy="521.1" r="8.2" fill="#fff" stroke="#222" stroke-width="0.9"/><text x="1279.13" y="523.94" font-size="7.9" fill="#262626" textLength="11.34" lengthAdjust="spacingAndGlyphs">235</text><text x="1128.7" y="473" font-size="12.35" font-weight="700" fill="#111" textLength="50.5" lengthAdjust="spacingAndGlyphs" xml:space="preserve">OFFICE 236</text><text x="1205.5" y="473" font-size="12.35" font-weight="700" fill="#111" textLength="60.9" lengthAdjust="spacingAndGlyphs" xml:space="preserve">MEETING  234</text><text x="1129.5" y="547" font-size="12.35" font-weight="700" fill="#111" textLength="50.5" lengthAdjust="spacingAndGlyphs" xml:space="preserve">OFFICE 237</text><text x="1205.5" y="547" font-size="12.35" font-weight="700" fill="#111" textLength="61.3" lengthAdjust="spacingAndGlyphs" xml:space="preserve">MEETING  235</text><path d="M1641.3 438.81L1738.8 431.39" stroke="#1c1c1c" stroke-width="3.3"/><path d="M1642.8 439.6L1737.3 432.4" stroke="#999" stroke-width="0.6" stroke-dasharray="5 3"/><path d="M1609.3 590V533.7 M1609.3 474.7V458.25Q1609.3 441.75 1625.8 440.5L1642.8 439.2M1737.3 432L1757.3 430.48Q1773.8 429.22 1773.8 445.72V474.7 M1773.8 533.7V590" stroke="#161616" stroke-width="4.7" stroke-linejoin="round"/><path d="M1609.3 590V533.7 M1609.3 474.7V458.25Q1609.3 441.75 1625.8 440.5L1642.8 439.2M1737.3 432L1757.3 430.48Q1773.8 429.22 1773.8 445.72V474.7 M1773.8 533.7V590" stroke="url(#h)" stroke-width="2.1" stroke-linejoin="round"/><path d="M1691.3 590V436.5" stroke="#161616" stroke-width="4.7" stroke-linejoin="round"/><path d="M1691.3 590V436.5" stroke="url(#h)" stroke-width="2.1" stroke-linejoin="round"/><path d="M1606.9 504.3H1776.2" stroke="#161616" stroke-width="5.6" stroke-linejoin="round"/><path d="M1606.9 504.3H1776.2" stroke="url(#h)" stroke-width="3" stroke-linejoin="round"/><path d="M1634.9 498.8A25 25 0 0 0 1609.9 473.8" stroke="#222" stroke-width="0.9"/><path d="M1609.9 498.8H1634.9" stroke="#222" stroke-width="1.8"/><path d="M1634.9 509.5A25 25 0 0 1 1609.9 534.5" stroke="#222" stroke-width="0.9"/><path d="M1609.9 509.5H1634.9" stroke="#222" stroke-width="1.8"/><circle cx="1601.7" cy="487.5" r="8.2" fill="#fff" stroke="#222" stroke-width="0.9"/><text x="1596.03" y="490.34" font-size="7.9" fill="#262626" textLength="11.34" lengthAdjust="spacingAndGlyphs">231</text><circle cx="1601.7" cy="521.1" r="8.2" fill="#fff" stroke="#222" stroke-width="0.9"/><text x="1596.03" y="523.94" font-size="7.9" fill="#262626" textLength="11.34" lengthAdjust="spacingAndGlyphs">232</text><path d="M1748.2 498.8A25 25 0 0 1 1773.2 473.8" stroke="#222" stroke-width="0.9"/><path d="M1773.2 498.8H1748.2" stroke="#222" stroke-width="1.8"/><path d="M1748.2 509.5A25 25 0 0 0 1773.2 534.5" stroke="#222" stroke-width="0.9"/><path d="M1773.2 509.5H1748.2" stroke="#222" stroke-width="1.8"/><circle cx="1774.1" cy="487.5" r="8.2" fill="#fff" stroke="#222" stroke-width="0.9"/><text x="1768.43" y="490.34" font-size="7.9" fill="#262626" textLength="11.34" lengthAdjust="spacingAndGlyphs">229</text><circle cx="1774.1" cy="521.1" r="8.2" fill="#fff" stroke="#222" stroke-width="0.9"/><text x="1768.43" y="523.94" font-size="7.9" fill="#262626" textLength="11.34" lengthAdjust="spacingAndGlyphs">230</text><text x="1623" y="474.8" font-size="12.35" font-weight="700" fill="#111" textLength="60.2" lengthAdjust="spacingAndGlyphs" xml:space="preserve">MEETING  231</text><text x="1704.7" y="474.8" font-size="12.35" font-weight="700" fill="#111" textLength="52.5" lengthAdjust="spacingAndGlyphs" xml:space="preserve">OFFICE  229</text><text x="1622.5" y="557.8" font-size="12.35" font-weight="700" fill="#111" textLength="60.5" lengthAdjust="spacingAndGlyphs" xml:space="preserve">MEETING  232</text><text x="1704.7" y="557.8" font-size="12.35" font-weight="700" fill="#111" textLength="52.5" lengthAdjust="spacingAndGlyphs" xml:space="preserve">OFFICE  230</text><path d="M1888.6 419.97L1987.3 412.45" stroke="#1c1c1c" stroke-width="3.3"/><path d="M1890.1 420.76L1985.8 413.46" stroke="#999" stroke-width="0.6" stroke-dasharray="5 3"/><path d="M1856.6 590V534.1 M1856.6 475.1V439.41Q1856.6 422.91 1873.1 421.65L1890.1 420.36M1985.8 413.06L2005.8 411.54Q2022.3 410.28 2022.3 426.78V590" stroke="#161616" stroke-width="4.7" stroke-linejoin="round"/><path d="M1856.6 590V534.1 M1856.6 475.1V439.41Q1856.6 422.91 1873.1 421.65L1890.1 420.36M1985.8 413.06L2005.8 411.54Q2022.3 410.28 2022.3 426.78V590" stroke="url(#h)" stroke-width="2.1" stroke-linejoin="round"/><path d="M1854.2 504.7H2024.7" stroke="#161616" stroke-width="5.6" stroke-linejoin="round"/><path d="M1854.2 504.7H2024.7" stroke="url(#h)" stroke-width="3" stroke-linejoin="round"/><path d="M1882.2 499.2A25 25 0 0 0 1857.2 474.2" stroke="#222" stroke-width="0.9"/><path d="M1857.2 499.2H1882.2" stroke="#222" stroke-width="1.8"/><path d="M1882.2 509.9A25 25 0 0 1 1857.2 534.9" stroke="#222" stroke-width="0.9"/><path d="M1857.2 509.9H1882.2" stroke="#222" stroke-width="1.8"/><circle cx="1856.3" cy="487.9" r="8.2" fill="#fff" stroke="#222" stroke-width="0.9"/><text x="1850.63" y="490.74" font-size="7.9" fill="#262626" textLength="11.34" lengthAdjust="spacingAndGlyphs">227</text><circle cx="1856.3" cy="521.5" r="8.2" fill="#fff" stroke="#222" stroke-width="0.9"/><text x="1850.63" y="524.34" font-size="7.9" fill="#262626" textLength="11.34" lengthAdjust="spacingAndGlyphs">228</text><path d="M1320.3 444.84L1443.25 454.21L1566.2 444.84" stroke="#161616" stroke-width="3.6" stroke-linejoin="round"/><path d="M1320.3 444.84L1443.25 454.21L1566.2 444.84" stroke="url(#h)" stroke-width="1.2" stroke-linejoin="round"/><path d="M1320.3 460.4H1566.2" stroke="#161616" stroke-width="3.8" stroke-linejoin="round"/><path d="M1320.3 460.4H1566.2" stroke="url(#h)" stroke-width="1.2" stroke-linejoin="round"/><path d="M1320.3 442.44V480.5 M1566.2 442.44V480.5" stroke="#161616" stroke-width="4" stroke-linejoin="round"/><path d="M1320.3 442.44V480.5 M1566.2 442.44V480.5" stroke="url(#h)" stroke-width="1.4" stroke-linejoin="round"/><path d="M1324.5 463.5h38v16.2h-38z" stroke-width="1.6"/><path d="M1524 463.5h38v16.2h-38z" stroke-width="1.6"/><path d="M1364.6 462.3V480.5 M1521.9 462.3V480.5" stroke="#161616" stroke-width="4" stroke-linejoin="round"/><path d="M1364.6 462.3V480.5 M1521.9 462.3V480.5" stroke="url(#h)" stroke-width="1.4" stroke-linejoin="round"/><path d="M1367.8 479.6H1519.3 M1322 480.5H1366 M1520.5 480.5H1564.5" stroke-width="1.1"/><path d="M1381 462.8V471.8H1506V462.8" stroke="#333" stroke-width="0.9" stroke-dasharray="3.4 2.2"/><rect x="1432.5" y="466.2" width="22.5" height="10.2" rx="1.5" fill="#fff" stroke="#111" stroke-width="1.1"/><path d="M1443.7 461.5V470.5 M1441.2 465h5 M1442 468h3.4" stroke-width="1.1"/><path d="M1367.8 491.3H1519.3V540.3H1367.8Z" stroke="#333" stroke-dasharray="3.4 2.2"/><path d="M1367.8 502.8H1519.3V528.4H1367.8Z" stroke-width="1.1"/><text x="1401.6" y="521.3" font-size="12.79" font-weight="700" fill="#111" textLength="89.7" lengthAdjust="spacingAndGlyphs" xml:space="preserve">BREAK ROOM  233</text><path d="M1330 560.8H1556 M1330 563.8H1556 M1330 580H1556 M1330 583H1556"/><rect x="1307.8" y="560.8" width="22.5" height="22.3" fill="url(#h)" stroke="#111" stroke-width="1.1"/><rect x="1311.55" y="564.6" width="15" height="14.7" fill="#fff" stroke="#111" stroke-width="1"/><path d="M1319.1 566V578 M1315.6 568.2h7 M1316.6 574h5"/><rect x="1556.2" y="560.8" width="22.5" height="22.3" fill="url(#h)" stroke="#111" stroke-width="1.1"/><rect x="1559.95" y="564.6" width="15" height="14.7" fill="#fff" stroke="#111" stroke-width="1"/><path d="M1567.5 566V578 M1564 568.2h7 M1565 574h5"/>
<rect x="308.9" y="118.8" width="151.2" height="162" fill="#ffcb42" fill-opacity="0.79" stroke="#e6b538" stroke-width="1.3"/><text x="343" y="180.9" font-size="25.6" fill="#25372a" textLength="90" lengthAdjust="spacingAndGlyphs">33 sq m</text><path d="M308.2 365.4L574 385.8V590H308.2Z" fill="#064663" fill-opacity="0.75" stroke="#f1d766" stroke-width="1.9"/><text x="393" y="458.9" font-size="26" fill="#f3e27a" textLength="105" lengthAdjust="spacingAndGlyphs">385 cu m</text>
<rect x="1864" y="105" width="20" height="497" fill="#eeeeee" stroke="none"/>
<rect x="1872" y="326" width="3.4" height="113" rx="1.5" fill="#8c8c8c" stroke="none"/>
</svg>
</div>
</div></body></html>
